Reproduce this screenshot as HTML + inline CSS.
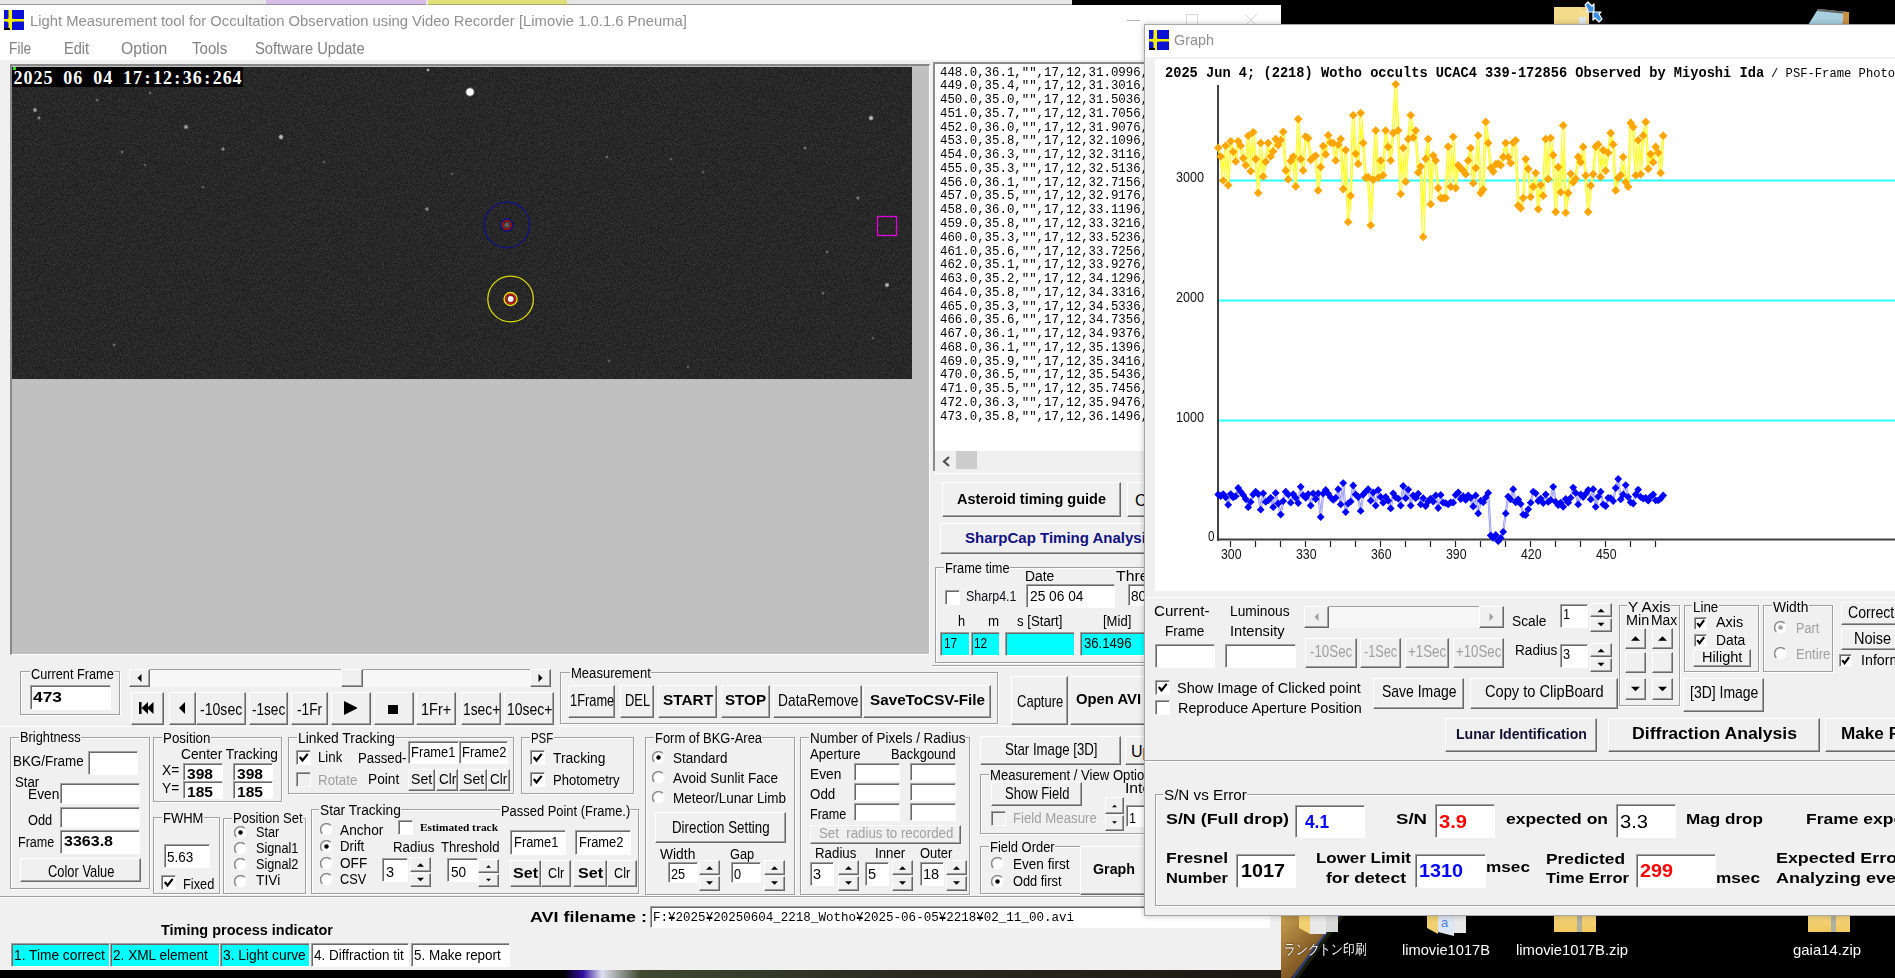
<!DOCTYPE html>
<html><head><meta charset="utf-8"><style>
html,body{margin:0;padding:0;width:1895px;height:978px;overflow:hidden;background:#000;}
body{position:relative;font-family:"Liberation Sans", sans-serif;}
div{position:absolute;box-sizing:border-box;}
.t{position:absolute;white-space:pre;transform-origin:0 0;}
svg{position:absolute;}
</style></head><body>
<div style="left:0px;top:0px;width:266px;height:5px;background:#e6e6e6;border-bottom:1px solid #9a9a9a;"></div>
<div style="left:266px;top:0px;width:160px;height:5px;background:#d9bde9;border-bottom:1px solid #9a8aa8;"></div>
<div style="left:426px;top:0px;width:2px;height:5px;background:#e6e6e6;"></div>
<div style="left:428px;top:0px;width:139px;height:5px;background:#dfe07a;border-bottom:1px solid #a8a860;"></div>
<div style="left:567px;top:0px;width:505px;height:5px;background:#e6e6e6;border-bottom:1px solid #9a9a9a;"></div>
<svg style="left:1540px;top:0" width="80" height="25"><rect x="14" y="7" width="35" height="18" fill="#f2d47a"/><polygon points="14,7 40,7 49,14 49,25 14,25" fill="#f5dc8c"/><rect x="39" y="17" width="7" height="8" fill="#e0e8f0"/><g stroke="#fff" stroke-width="1.2" stroke-linejoin="round"><polygon points="45,5 48,2 52,6 54,4 54,12 46,12 48,10" fill="#3a8ee0"/><polygon points="62,19 59,22 55,18 53,20 53,12 61,12 59,14" fill="#3a8ee0"/></g></svg>
<svg style="left:1790px;top:0" width="80" height="25"><polygon points="18,25 28,9 58,12 52,25" fill="#a8d0e0"/><polygon points="28,9 58,12 57,14 27,11" fill="#606060"/><rect x="53" y="12" width="6" height="13" fill="#c89040"/></svg>
<div style="left:0px;top:5px;width:1281px;height:966px;background:#f0f0f0;"></div>
<div style="left:0px;top:5px;width:1281px;height:30px;background:#fff;"></div>
<div style="left:0px;top:35px;width:1281px;height:25px;background:#fff;"></div>
<svg style="left:4px;top:10px" width="20" height="20"><rect x="0" y="0" width="20" height="20" fill="#0a10d8"/><rect x="4.5" y="0" width="3.5" height="20" fill="#f5f000"/><rect x="0" y="9" width="20" height="2.5" fill="#f5f000"/><polygon points="6.2,3 8,8.5 13,10.2 8,12 6.2,17 4.5,12 0,10.2 4.5,8.5" fill="#f5f000"/><rect x="0" y="18" width="6" height="2" fill="#000"/></svg>
<span class="t" style="left:30px;top:12.60px;font-size:15px;line-height:15px;color:#8f8f8f;transform:scaleX(0.9877);">Light Measurement tool for Occultation Observation using Video Recorder [Limovie 1.0.1.6 Pneuma]</span>
<div style="left:1127px;top:20px;width:13px;height:1px;background:#b0b0b0;"></div>
<div style="left:1186px;top:14px;width:12px;height:12px;border:1px solid #dcdcdc;"></div>
<svg style="left:1244px;top:13px" width="14" height="14"><path d="M1 1 L13 13 M13 1 L1 13" stroke="#d8d8d8" stroke-width="1"/></svg>
<span class="t" style="left:9px;top:40.17px;font-size:16.1px;line-height:16.1px;color:#808080;transform:scaleX(0.8533);">File</span>
<span class="t" style="left:64px;top:40.17px;font-size:16.1px;line-height:16.1px;color:#808080;transform:scaleX(0.9068);">Edit</span>
<span class="t" style="left:121px;top:40.17px;font-size:16.1px;line-height:16.1px;color:#808080;transform:scaleX(0.9758);">Option</span>
<span class="t" style="left:192px;top:40.17px;font-size:16.1px;line-height:16.1px;color:#808080;transform:scaleX(0.9370);">Tools</span>
<span class="t" style="left:255px;top:40.17px;font-size:16.1px;line-height:16.1px;color:#808080;transform:scaleX(0.9146);">Software Update</span>
<div style="left:10px;top:64px;width:920px;height:591px;background:#c0c0c0;border-style:solid;border-width:2px 1px 1px 2px;border-color:#888 #fff #fff #888;"></div>
<svg style="left:12px;top:67px" width="900" height="312"><defs><filter id="nz" x="0" y="0" width="100%" height="100%"><feTurbulence type="fractalNoise" baseFrequency="1.2" numOctaves="1" seed="3"/><feColorMatrix type="matrix" values="0 0 0 0 0.36  0 0 0 0 0.36  0 0 0 0 0.36  0.5 0 0 0 -0.18"/></filter><radialGradient id="sg"><stop offset="0" stop-color="#fff"/><stop offset="0.5" stop-color="#fff" stop-opacity=".8"/><stop offset="1" stop-color="#fff" stop-opacity="0"/></radialGradient></defs><rect width="900" height="312" fill="#1e1e1e"/><rect width="900" height="312" filter="url(#nz)"/><circle cx="458" cy="25" r="5.1" fill="url(#sg)" opacity="1"/><circle cx="416" cy="3" r="1.9" fill="url(#sg)" opacity="0.7"/><circle cx="23" cy="43" r="2.6" fill="url(#sg)" opacity="0.6"/><circle cx="27" cy="51" r="2.1" fill="url(#sg)" opacity="0.5"/><circle cx="174" cy="60" r="2.7" fill="url(#sg)" opacity="0.6"/><circle cx="269" cy="70" r="2.9" fill="url(#sg)" opacity="0.75"/><circle cx="211" cy="82" r="2.2" fill="url(#sg)" opacity="0.5"/><circle cx="110" cy="85" r="1.9" fill="url(#sg)" opacity="0.35"/><circle cx="85" cy="33" r="1.9" fill="url(#sg)" opacity="0.35"/><circle cx="138" cy="26" r="1.9" fill="url(#sg)" opacity="0.35"/><circle cx="415" cy="142" r="2.4" fill="url(#sg)" opacity="0.5"/><circle cx="595" cy="90" r="1.9" fill="url(#sg)" opacity="0.35"/><circle cx="440" cy="107" r="1.8" fill="url(#sg)" opacity="0.3"/><circle cx="312" cy="95" r="1.8" fill="url(#sg)" opacity="0.3"/><circle cx="191" cy="120" r="1.8" fill="url(#sg)" opacity="0.3"/><circle cx="133" cy="98" r="1.8" fill="url(#sg)" opacity="0.3"/><circle cx="859" cy="51" r="2.9" fill="url(#sg)" opacity="0.75"/><circle cx="793" cy="81" r="1.9" fill="url(#sg)" opacity="0.4"/><circle cx="846" cy="131" r="2.1" fill="url(#sg)" opacity="0.45"/><circle cx="875" cy="218" r="2.7" fill="url(#sg)" opacity="0.7"/><circle cx="815" cy="185" r="1.9" fill="url(#sg)" opacity="0.35"/><circle cx="811" cy="226" r="1.9" fill="url(#sg)" opacity="0.35"/><circle cx="102" cy="278" r="1.9" fill="url(#sg)" opacity="0.35"/><circle cx="659" cy="92" r="1.8" fill="url(#sg)" opacity="0.3"/><circle cx="691" cy="105" r="1.8" fill="url(#sg)" opacity="0.3"/><circle cx="861" cy="271" r="1.8" fill="url(#sg)" opacity="0.3"/><circle cx="597" cy="294" r="1.9" fill="url(#sg)" opacity="0.3"/><circle cx="676" cy="300" r="1.8" fill="url(#sg)" opacity="0.3"/><circle cx="458" cy="25" r="3.5" fill="#fff"/><circle cx="494.8" cy="158" r="22.8" fill="none" stroke="#10108a" stroke-width="1.3"/><circle cx="494.8" cy="158" r="2.5" fill="#606060"/><circle cx="494.8" cy="158" r="4.2" fill="none" stroke="#b01010" stroke-width="1.5"/><circle cx="494.8" cy="158" r="6" fill="none" stroke="#10108a" stroke-width="1.3"/><circle cx="498.6" cy="232" r="22.8" fill="none" stroke="#d8d810" stroke-width="1.3"/><circle cx="498.6" cy="232" r="3" fill="#f0f0f0"/><circle cx="498.6" cy="232" r="4.6" fill="none" stroke="#e01010" stroke-width="1.6"/><circle cx="498.6" cy="232" r="6.5" fill="none" stroke="#e0e010" stroke-width="1.4"/><rect x="865.5" y="149.5" width="19" height="19" fill="none" stroke="#e000e0" stroke-width="1.3"/></svg>
<div style="left:12px;top:67px;width:231px;height:20px;background:#000;"></div>
<div style="left:13px;top:67px;width:3px;height:3px;background:#20e020;"></div>
<span class="t" style="left:13.00px;top:69px;width:10px;text-align:center;font-family:'Liberation Serif', serif;font-weight:bold;font-size:18px;line-height:18px;color:#fff;">2</span>
<span class="t" style="left:22.96px;top:69px;width:10px;text-align:center;font-family:'Liberation Serif', serif;font-weight:bold;font-size:18px;line-height:18px;color:#fff;">0</span>
<span class="t" style="left:32.92px;top:69px;width:10px;text-align:center;font-family:'Liberation Serif', serif;font-weight:bold;font-size:18px;line-height:18px;color:#fff;">2</span>
<span class="t" style="left:42.88px;top:69px;width:10px;text-align:center;font-family:'Liberation Serif', serif;font-weight:bold;font-size:18px;line-height:18px;color:#fff;">5</span>
<span class="t" style="left:62.80px;top:69px;width:10px;text-align:center;font-family:'Liberation Serif', serif;font-weight:bold;font-size:18px;line-height:18px;color:#fff;">0</span>
<span class="t" style="left:72.76px;top:69px;width:10px;text-align:center;font-family:'Liberation Serif', serif;font-weight:bold;font-size:18px;line-height:18px;color:#fff;">6</span>
<span class="t" style="left:92.68px;top:69px;width:10px;text-align:center;font-family:'Liberation Serif', serif;font-weight:bold;font-size:18px;line-height:18px;color:#fff;">0</span>
<span class="t" style="left:102.64px;top:69px;width:10px;text-align:center;font-family:'Liberation Serif', serif;font-weight:bold;font-size:18px;line-height:18px;color:#fff;">4</span>
<span class="t" style="left:122.56px;top:69px;width:10px;text-align:center;font-family:'Liberation Serif', serif;font-weight:bold;font-size:18px;line-height:18px;color:#fff;">1</span>
<span class="t" style="left:132.52px;top:69px;width:10px;text-align:center;font-family:'Liberation Serif', serif;font-weight:bold;font-size:18px;line-height:18px;color:#fff;">7</span>
<span class="t" style="left:142.48px;top:69px;width:10px;text-align:center;font-family:'Liberation Serif', serif;font-weight:bold;font-size:18px;line-height:18px;color:#fff;">:</span>
<span class="t" style="left:152.44px;top:69px;width:10px;text-align:center;font-family:'Liberation Serif', serif;font-weight:bold;font-size:18px;line-height:18px;color:#fff;">1</span>
<span class="t" style="left:162.40px;top:69px;width:10px;text-align:center;font-family:'Liberation Serif', serif;font-weight:bold;font-size:18px;line-height:18px;color:#fff;">2</span>
<span class="t" style="left:172.36px;top:69px;width:10px;text-align:center;font-family:'Liberation Serif', serif;font-weight:bold;font-size:18px;line-height:18px;color:#fff;">:</span>
<span class="t" style="left:182.32px;top:69px;width:10px;text-align:center;font-family:'Liberation Serif', serif;font-weight:bold;font-size:18px;line-height:18px;color:#fff;">3</span>
<span class="t" style="left:192.28px;top:69px;width:10px;text-align:center;font-family:'Liberation Serif', serif;font-weight:bold;font-size:18px;line-height:18px;color:#fff;">6</span>
<span class="t" style="left:202.24px;top:69px;width:10px;text-align:center;font-family:'Liberation Serif', serif;font-weight:bold;font-size:18px;line-height:18px;color:#fff;">:</span>
<span class="t" style="left:212.20px;top:69px;width:10px;text-align:center;font-family:'Liberation Serif', serif;font-weight:bold;font-size:18px;line-height:18px;color:#fff;">2</span>
<span class="t" style="left:222.16px;top:69px;width:10px;text-align:center;font-family:'Liberation Serif', serif;font-weight:bold;font-size:18px;line-height:18px;color:#fff;">6</span>
<span class="t" style="left:232.12px;top:69px;width:10px;text-align:center;font-family:'Liberation Serif', serif;font-weight:bold;font-size:18px;line-height:18px;color:#fff;">4</span>
<div style="left:933px;top:62px;width:227px;height:411px;background:#fff;border-style:solid;border-width:2px 0 0 2px;border-color:#8a8a8a;"></div>
<span class="t" style="left:940px;top:65.64px;font-size:13px;line-height:13px;color:#000;font-family:'Liberation Mono', monospace;transform:scaleX(0.9525);">448.0,36.1,"",17,12,31.0996,</span>
<span class="t" style="left:940px;top:79.40px;font-size:13px;line-height:13px;color:#000;font-family:'Liberation Mono', monospace;transform:scaleX(0.9525);">449.0,35.4,"",17,12,31.3016,</span>
<span class="t" style="left:940px;top:93.16px;font-size:13px;line-height:13px;color:#000;font-family:'Liberation Mono', monospace;transform:scaleX(0.9525);">450.0,35.0,"",17,12,31.5036,</span>
<span class="t" style="left:940px;top:106.92px;font-size:13px;line-height:13px;color:#000;font-family:'Liberation Mono', monospace;transform:scaleX(0.9525);">451.0,35.7,"",17,12,31.7056,</span>
<span class="t" style="left:940px;top:120.68px;font-size:13px;line-height:13px;color:#000;font-family:'Liberation Mono', monospace;transform:scaleX(0.9525);">452.0,36.0,"",17,12,31.9076,</span>
<span class="t" style="left:940px;top:134.44px;font-size:13px;line-height:13px;color:#000;font-family:'Liberation Mono', monospace;transform:scaleX(0.9525);">453.0,35.8,"",17,12,32.1096,</span>
<span class="t" style="left:940px;top:148.20px;font-size:13px;line-height:13px;color:#000;font-family:'Liberation Mono', monospace;transform:scaleX(0.9525);">454.0,36.3,"",17,12,32.3116,</span>
<span class="t" style="left:940px;top:161.96px;font-size:13px;line-height:13px;color:#000;font-family:'Liberation Mono', monospace;transform:scaleX(0.9525);">455.0,35.3,"",17,12,32.5136,</span>
<span class="t" style="left:940px;top:175.72px;font-size:13px;line-height:13px;color:#000;font-family:'Liberation Mono', monospace;transform:scaleX(0.9525);">456.0,36.1,"",17,12,32.7156,</span>
<span class="t" style="left:940px;top:189.48px;font-size:13px;line-height:13px;color:#000;font-family:'Liberation Mono', monospace;transform:scaleX(0.9525);">457.0,35.5,"",17,12,32.9176,</span>
<span class="t" style="left:940px;top:203.24px;font-size:13px;line-height:13px;color:#000;font-family:'Liberation Mono', monospace;transform:scaleX(0.9525);">458.0,36.0,"",17,12,33.1196,</span>
<span class="t" style="left:940px;top:217.00px;font-size:13px;line-height:13px;color:#000;font-family:'Liberation Mono', monospace;transform:scaleX(0.9525);">459.0,35.8,"",17,12,33.3216,</span>
<span class="t" style="left:940px;top:230.76px;font-size:13px;line-height:13px;color:#000;font-family:'Liberation Mono', monospace;transform:scaleX(0.9525);">460.0,35.3,"",17,12,33.5236,</span>
<span class="t" style="left:940px;top:244.52px;font-size:13px;line-height:13px;color:#000;font-family:'Liberation Mono', monospace;transform:scaleX(0.9525);">461.0,35.6,"",17,12,33.7256,</span>
<span class="t" style="left:940px;top:258.28px;font-size:13px;line-height:13px;color:#000;font-family:'Liberation Mono', monospace;transform:scaleX(0.9525);">462.0,35.1,"",17,12,33.9276,</span>
<span class="t" style="left:940px;top:272.04px;font-size:13px;line-height:13px;color:#000;font-family:'Liberation Mono', monospace;transform:scaleX(0.9525);">463.0,35.2,"",17,12,34.1296,</span>
<span class="t" style="left:940px;top:285.80px;font-size:13px;line-height:13px;color:#000;font-family:'Liberation Mono', monospace;transform:scaleX(0.9525);">464.0,35.8,"",17,12,34.3316,</span>
<span class="t" style="left:940px;top:299.56px;font-size:13px;line-height:13px;color:#000;font-family:'Liberation Mono', monospace;transform:scaleX(0.9525);">465.0,35.3,"",17,12,34.5336,</span>
<span class="t" style="left:940px;top:313.32px;font-size:13px;line-height:13px;color:#000;font-family:'Liberation Mono', monospace;transform:scaleX(0.9525);">466.0,35.6,"",17,12,34.7356,</span>
<span class="t" style="left:940px;top:327.08px;font-size:13px;line-height:13px;color:#000;font-family:'Liberation Mono', monospace;transform:scaleX(0.9525);">467.0,36.1,"",17,12,34.9376,</span>
<span class="t" style="left:940px;top:340.84px;font-size:13px;line-height:13px;color:#000;font-family:'Liberation Mono', monospace;transform:scaleX(0.9525);">468.0,36.1,"",17,12,35.1396,</span>
<span class="t" style="left:940px;top:354.60px;font-size:13px;line-height:13px;color:#000;font-family:'Liberation Mono', monospace;transform:scaleX(0.9525);">469.0,35.9,"",17,12,35.3416,</span>
<span class="t" style="left:940px;top:368.36px;font-size:13px;line-height:13px;color:#000;font-family:'Liberation Mono', monospace;transform:scaleX(0.9525);">470.0,36.5,"",17,12,35.5436,</span>
<span class="t" style="left:940px;top:382.12px;font-size:13px;line-height:13px;color:#000;font-family:'Liberation Mono', monospace;transform:scaleX(0.9525);">471.0,35.5,"",17,12,35.7456,</span>
<span class="t" style="left:940px;top:395.88px;font-size:13px;line-height:13px;color:#000;font-family:'Liberation Mono', monospace;transform:scaleX(0.9525);">472.0,36.3,"",17,12,35.9476,</span>
<span class="t" style="left:940px;top:409.64px;font-size:13px;line-height:13px;color:#000;font-family:'Liberation Mono', monospace;transform:scaleX(0.9525);">473.0,35.8,"",17,12,36.1496,</span>
<div style="left:935px;top:451px;width:225px;height:20px;background:#f0f0f0;"></div>
<svg style="left:940px;top:454px" width="14" height="14"><path d="M9 3 L4 7.5 L9 12" stroke="#505050" stroke-width="2.2" fill="none"/></svg>
<div style="left:956px;top:451px;width:21px;height:18px;background:#cdcdcd;"></div>
<div style="left:933px;top:471px;width:227px;height:2px;background:#f0f0f0;"></div>
<div style="left:935px;top:473px;width:225px;height:1px;background:#fff;"></div>
<div style="left:942px;top:482px;width:179px;height:35px;background:#f0f0f0;border-style:solid;border-width:1px;border-color:#fff #696969 #696969 #fff;box-shadow:inset -1px -1px 0 #a0a0a0;"></div>
<span class="t" style="left:957.0px;top:490.80px;font-size:15.0px;line-height:15.0px;color:#000;font-weight:bold;transform:scaleX(0.9664);">Asteroid timing guide</span>
<div style="left:1127px;top:482px;width:53px;height:35px;background:#f0f0f0;border-style:solid;border-width:1px;border-color:#fff #696969 #696969 #fff;box-shadow:inset -1px -1px 0 #a0a0a0;"></div>
<span class="t" style="left:1135px;top:492.17px;font-size:16.1px;line-height:16.1px;color:#000;">C</span>
<div style="left:940px;top:523px;width:240px;height:31px;background:#f0f0f0;border-style:solid;border-width:1px;border-color:#fff #696969 #696969 #fff;box-shadow:inset -1px -1px 0 #a0a0a0;"></div>
<span class="t" style="left:965px;top:529.80px;font-size:15.0px;line-height:15.0px;color:#101080;font-weight:bold;">SharpCap Timing Analysis</span>
<div style="left:935px;top:567px;width:245px;height:96px;border:1px solid #a0a0a0;box-shadow:1px 1px 0 #fff, inset 1px 1px 0 #fff;"></div>
<div style="left:944px;top:561px;width:66px;height:12px;background:#f0f0f0;"></div>
<span class="t" style="left:945px;top:560.69px;font-size:14.9px;line-height:14.9px;color:#000;transform:scaleX(0.8582);">Frame time</span>
<span class="t" style="left:1025px;top:568.69px;font-size:14.9px;line-height:14.9px;color:#000;transform:scaleX(0.9308);">Date</span>
<span class="t" style="left:1116px;top:568.69px;font-size:14.9px;line-height:14.9px;color:#000;transform:scaleX(1.0609);">Thres</span>
<div style="left:945px;top:590px;width:15px;height:15px;background:#fff;border-style:solid;border-width:1px;border-color:#a0a0a0 #fff #fff #a0a0a0;box-shadow:inset 1px 1px 0 #696969;"></div>
<span class="t" style="left:966px;top:589.19px;font-size:14.9px;line-height:14.9px;color:#101018;transform:scaleX(0.8352);">Sharp4.1</span>
<div style="left:1026px;top:584px;width:89px;height:24px;background:#fff;border-style:solid;border-width:1px;border-color:#a0a0a0 #fff #fff #a0a0a0;box-shadow:inset 1px 1px 0 #696969;"></div>
<span class="t" style="left:1030px;top:588.69px;font-size:14.9px;line-height:14.9px;color:#000;transform:scaleX(0.9231);">25 06 04</span>
<div style="left:1128px;top:584px;width:52px;height:22px;background:#fff;border-style:solid;border-width:1px;border-color:#a0a0a0 #fff #fff #a0a0a0;box-shadow:inset 1px 1px 0 #696969;"></div>
<span class="t" style="left:1131px;top:588.69px;font-size:14.9px;line-height:14.9px;color:#000;transform:scaleX(0.9143);">80</span>
<span class="t" style="left:958px;top:613.69px;font-size:14.9px;line-height:14.9px;color:#000;transform:scaleX(0.8533);">h</span>
<span class="t" style="left:988px;top:613.69px;font-size:14.9px;line-height:14.9px;color:#000;transform:scaleX(0.8954);">m</span>
<span class="t" style="left:1017px;top:613.69px;font-size:14.9px;line-height:14.9px;color:#000;transform:scaleX(0.8855);">s [Start]</span>
<span class="t" style="left:1103px;top:613.69px;font-size:14.9px;line-height:14.9px;color:#000;transform:scaleX(0.8761);">[Mid]</span>
<div style="left:940px;top:632px;width:30px;height:24px;background:#00ffff;border-style:solid;border-width:1px;border-color:#a0a0a0 #fff #fff #a0a0a0;box-shadow:inset 1px 1px 0 #696969;"></div>
<span class="t" style="left:944px;top:636.39px;font-size:14.9px;line-height:14.9px;color:#000;transform:scaleX(0.7924);">17</span>
<div style="left:971px;top:632px;width:29px;height:24px;background:#00ffff;border-style:solid;border-width:1px;border-color:#a0a0a0 #fff #fff #a0a0a0;box-shadow:inset 1px 1px 0 #696969;"></div>
<span class="t" style="left:974px;top:636.39px;font-size:14.9px;line-height:14.9px;color:#000;transform:scaleX(0.7924);">12</span>
<div style="left:1005px;top:632px;width:70px;height:24px;background:#00ffff;border-style:solid;border-width:1px;border-color:#a0a0a0 #fff #fff #a0a0a0;box-shadow:inset 1px 1px 0 #696969;"></div>
<div style="left:1080px;top:632px;width:80px;height:24px;background:#00ffff;border-style:solid;border-width:1px;border-color:#a0a0a0 #fff #fff #a0a0a0;box-shadow:inset 1px 1px 0 #696969;"></div>
<span class="t" style="left:1084px;top:636.39px;font-size:14.9px;line-height:14.9px;color:#000;transform:scaleX(0.8815);">36.1496</span>
<div style="left:932px;top:665px;width:228px;height:2px;border-top:1px solid #a0a0a0;background:#fff;"></div>
<div style="left:20px;top:671px;width:100px;height:44px;border:1px solid #a0a0a0;box-shadow:1px 1px 0 #fff, inset 1px 1px 0 #fff;"></div>
<div style="left:30px;top:665px;width:84px;height:12px;background:#f0f0f0;"></div>
<span class="t" style="left:31px;top:666.69px;font-size:14.9px;line-height:14.9px;color:#000;transform:scaleX(0.8551);">Current Frame</span>
<div style="left:30px;top:685px;width:81px;height:25px;background:#fff;border-style:solid;border-width:1px;border-color:#a0a0a0 #fff #fff #a0a0a0;box-shadow:inset 1px 1px 0 #696969;"></div>
<span class="t" style="left:33px;top:688.80px;font-size:15px;line-height:15px;color:#000;font-weight:bold;transform:scaleX(1.1586);">473</span>
<div style="left:129px;top:669px;width:422px;height:18px;background:#f7f7f7;border-top:1px solid #a0a0a0;"></div>
<div style="left:129px;top:669px;width:21px;height:18px;background:#f0f0f0;border-style:solid;border-width:1px;border-color:#fff #696969 #696969 #fff;box-shadow:inset -1px -1px 0 #a0a0a0;"></div>
<svg style="position:absolute;left:0;top:0;overflow:visible" width="1" height="1"><polygon points="141.5,674.0 141.5,682.0 137.5,678.0" fill="#000"/></svg>
<div style="left:530px;top:669px;width:21px;height:18px;background:#f0f0f0;border-style:solid;border-width:1px;border-color:#fff #696969 #696969 #fff;box-shadow:inset -1px -1px 0 #a0a0a0;"></div>
<svg style="position:absolute;left:0;top:0;overflow:visible" width="1" height="1"><polygon points="538.5,674.0 538.5,682.0 542.5,678.0" fill="#000"/></svg>
<div style="left:341px;top:669px;width:22px;height:18px;background:#f0f0f0;border-style:solid;border-width:1px;border-color:#fff #696969 #696969 #fff;box-shadow:inset -1px -1px 0 #a0a0a0;"></div>
<div style="left:131px;top:692px;width:33px;height:33px;background:#f0f0f0;border-style:solid;border-width:1px;border-color:#fff #696969 #696969 #fff;box-shadow:inset -1px -1px 0 #a0a0a0;"></div>
<div style="left:169px;top:692px;width:27px;height:33px;background:#f0f0f0;border-style:solid;border-width:1px;border-color:#fff #696969 #696969 #fff;box-shadow:inset -1px -1px 0 #a0a0a0;"></div>
<div style="left:196px;top:692px;width:50px;height:33px;background:#f0f0f0;border-style:solid;border-width:1px;border-color:#fff #696969 #696969 #fff;box-shadow:inset -1px -1px 0 #a0a0a0;"></div>
<span class="t" style="left:200.0px;top:700.67px;font-size:16.1px;line-height:16.1px;color:#000;transform:scaleX(0.8746);">-10sec</span>
<div style="left:249px;top:692px;width:39px;height:33px;background:#f0f0f0;border-style:solid;border-width:1px;border-color:#fff #696969 #696969 #fff;box-shadow:inset -1px -1px 0 #a0a0a0;"></div>
<span class="t" style="left:252.0px;top:700.67px;font-size:16.1px;line-height:16.1px;color:#000;transform:scaleX(0.8435);">-1sec</span>
<div style="left:291px;top:692px;width:37px;height:33px;background:#f0f0f0;border-style:solid;border-width:1px;border-color:#fff #696969 #696969 #fff;box-shadow:inset -1px -1px 0 #a0a0a0;"></div>
<span class="t" style="left:297.0px;top:700.67px;font-size:16.1px;line-height:16.1px;color:#000;transform:scaleX(0.8524);">-1Fr</span>
<div style="left:331px;top:692px;width:40px;height:33px;background:#f0f0f0;border-style:solid;border-width:1px;border-color:#fff #696969 #696969 #fff;box-shadow:inset -1px -1px 0 #a0a0a0;"></div>
<div style="left:374px;top:692px;width:40px;height:33px;background:#f0f0f0;border-style:solid;border-width:1px;border-color:#fff #696969 #696969 #fff;box-shadow:inset -1px -1px 0 #a0a0a0;"></div>
<div style="left:416px;top:692px;width:40px;height:33px;background:#f0f0f0;border-style:solid;border-width:1px;border-color:#fff #696969 #696969 #fff;box-shadow:inset -1px -1px 0 #a0a0a0;"></div>
<span class="t" style="left:421.0px;top:700.67px;font-size:16.1px;line-height:16.1px;color:#000;transform:scaleX(0.8997);">1Fr+</span>
<div style="left:461px;top:692px;width:40px;height:33px;background:#f0f0f0;border-style:solid;border-width:1px;border-color:#fff #696969 #696969 #fff;box-shadow:inset -1px -1px 0 #a0a0a0;"></div>
<span class="t" style="left:462.5px;top:700.67px;font-size:16.1px;line-height:16.1px;color:#000;transform:scaleX(0.8577);">1sec+</span>
<div style="left:504px;top:692px;width:50px;height:33px;background:#f0f0f0;border-style:solid;border-width:1px;border-color:#fff #696969 #696969 #fff;box-shadow:inset -1px -1px 0 #a0a0a0;"></div>
<span class="t" style="left:506.5px;top:700.67px;font-size:16.1px;line-height:16.1px;color:#000;transform:scaleX(0.8647);">10sec+</span>
<svg style="left:139px;top:702px" width="20" height="12"><rect x="0" y="0" width="2.5" height="12" fill="#000"/><polygon points="2.5,6 9,0 9,12" fill="#000"/><polygon points="8,6 14.5,0 14.5,12" fill="#000"/></svg>
<svg style="left:177px;top:702px" width="10" height="12"><polygon points="2,6 8,0 8,12" fill="#000"/></svg>
<svg style="left:343px;top:701px" width="14" height="14"><polygon points="1,0 15,7 1,14" fill="#000"/></svg>
<div style="left:388px;top:704.5px;width:9.5px;height:9.0px;background:#000;"></div>
<div style="left:560px;top:672px;width:438px;height:52px;border:1px solid #a0a0a0;box-shadow:1px 1px 0 #fff, inset 1px 1px 0 #fff;"></div>
<div style="left:570px;top:666px;width:81px;height:12px;background:#f0f0f0;"></div>
<span class="t" style="left:571px;top:665.69px;font-size:14.9px;line-height:14.9px;color:#000;transform:scaleX(0.8761);">Measurement</span>
<div style="left:568px;top:685px;width:47px;height:33px;background:#f0f0f0;border-style:solid;border-width:1px;border-color:#fff #696969 #696969 #fff;box-shadow:inset -1px -1px 0 #a0a0a0;"></div>
<span class="t" style="left:569.5px;top:692.17px;font-size:16.1px;line-height:16.1px;color:#000;transform:scaleX(0.7982);">1Frame</span>
<div style="left:620px;top:685px;width:34px;height:33px;background:#f0f0f0;border-style:solid;border-width:1px;border-color:#fff #696969 #696969 #fff;box-shadow:inset -1px -1px 0 #a0a0a0;"></div>
<span class="t" style="left:624.5px;top:692.17px;font-size:16.1px;line-height:16.1px;color:#000;transform:scaleX(0.8032);">DEL</span>
<div style="left:658px;top:685px;width:59px;height:33px;background:#f0f0f0;border-style:solid;border-width:1px;border-color:#fff #696969 #696969 #fff;box-shadow:inset -1px -1px 0 #a0a0a0;"></div>
<span class="t" style="left:662.5px;top:692.30px;font-size:15.0px;line-height:15.0px;color:#000;font-weight:bold;transform:scaleX(1.0229);">START</span>
<div style="left:721px;top:685px;width:49px;height:33px;background:#f0f0f0;border-style:solid;border-width:1px;border-color:#fff #696969 #696969 #fff;box-shadow:inset -1px -1px 0 #a0a0a0;"></div>
<span class="t" style="left:725.0px;top:692.30px;font-size:15.0px;line-height:15.0px;color:#000;font-weight:bold;transform:scaleX(1.0106);">STOP</span>
<div style="left:773px;top:685px;width:89px;height:33px;background:#f0f0f0;border-style:solid;border-width:1px;border-color:#fff #696969 #696969 #fff;box-shadow:inset -1px -1px 0 #a0a0a0;"></div>
<span class="t" style="left:777.5px;top:692.17px;font-size:16.1px;line-height:16.1px;color:#000;transform:scaleX(0.8568);">DataRemove</span>
<div style="left:863px;top:685px;width:128px;height:33px;background:#f0f0f0;border-style:solid;border-width:1px;border-color:#fff #696969 #696969 #fff;box-shadow:inset -1px -1px 0 #a0a0a0;"></div>
<span class="t" style="left:869.5px;top:692.30px;font-size:15.0px;line-height:15.0px;color:#000;font-weight:bold;transform:scaleX(1.0168);">SaveToCSV-File</span>
<div style="left:1011px;top:676px;width:57px;height:49px;background:#f0f0f0;border-style:solid;border-width:1px;border-color:#fff #696969 #696969 #fff;box-shadow:inset -1px -1px 0 #a0a0a0;"></div>
<span class="t" style="left:1016.5px;top:692.67px;font-size:16.1px;line-height:16.1px;color:#000;transform:scaleX(0.8081);">Capture</span>
<div style="left:1070px;top:676px;width:110px;height:49px;background:#f0f0f0;border-style:solid;border-width:1px;border-color:#fff #696969 #696969 #fff;box-shadow:inset -1px -1px 0 #a0a0a0;"></div>
<span class="t" style="left:1076px;top:691.30px;font-size:15.0px;line-height:15.0px;color:#000;font-weight:bold;transform:scaleX(0.9872);">Open AVI</span>
<div style="left:0px;top:726px;width:1281px;height:1px;background:#fff;"></div>
<div style="left:10px;top:737px;width:140px;height:152px;border:1px solid #a0a0a0;box-shadow:1px 1px 0 #fff, inset 1px 1px 0 #fff;"></div>
<div style="left:19px;top:731px;width:62px;height:12px;background:#f0f0f0;"></div>
<span class="t" style="left:20px;top:730.39px;font-size:14.9px;line-height:14.9px;color:#000;transform:scaleX(0.8610);">Brightness</span>
<span class="t" style="left:13px;top:753.69px;font-size:14.9px;line-height:14.9px;color:#000;transform:scaleX(0.8990);">BKG/Frame</span>
<div style="left:88px;top:751px;width:50px;height:24px;background:#fff;border-style:solid;border-width:1px;border-color:#a0a0a0 #fff #fff #a0a0a0;box-shadow:inset 1px 1px 0 #696969;"></div>
<span class="t" style="left:15px;top:774.69px;font-size:14.9px;line-height:14.9px;color:#000;transform:scaleX(0.8872);">Star</span>
<span class="t" style="left:28px;top:786.69px;font-size:14.9px;line-height:14.9px;color:#000;transform:scaleX(0.9220);">Even</span>
<div style="left:60px;top:783px;width:80px;height:21px;background:#fff;border-style:solid;border-width:1px;border-color:#a0a0a0 #fff #fff #a0a0a0;box-shadow:inset 1px 1px 0 #696969;"></div>
<span class="t" style="left:28px;top:812.69px;font-size:14.9px;line-height:14.9px;color:#000;transform:scaleX(0.8609);">Odd</span>
<div style="left:60px;top:807px;width:80px;height:21px;background:#fff;border-style:solid;border-width:1px;border-color:#a0a0a0 #fff #fff #a0a0a0;box-shadow:inset 1px 1px 0 #696969;"></div>
<span class="t" style="left:18px;top:834.69px;font-size:14.9px;line-height:14.9px;color:#000;transform:scaleX(0.8448);">Frame</span>
<div style="left:60px;top:830px;width:80px;height:24px;background:#fff;border-style:solid;border-width:1px;border-color:#a0a0a0 #fff #fff #a0a0a0;box-shadow:inset 1px 1px 0 #696969;"></div>
<span class="t" style="left:64px;top:833.30px;font-size:15.0px;line-height:15.0px;color:#000;font-weight:bold;transform:scaleX(1.0678);">3363.8</span>
<div style="left:20px;top:858px;width:121px;height:24px;background:#f0f0f0;border-style:solid;border-width:1px;border-color:#fff #696969 #696969 #fff;box-shadow:inset -1px -1px 0 #a0a0a0;"></div>
<span class="t" style="left:47.5px;top:862.67px;font-size:16.1px;line-height:16.1px;color:#000;transform:scaleX(0.8008);">Color Value</span>
<div style="left:153px;top:737px;width:129px;height:65px;border:1px solid #a0a0a0;box-shadow:1px 1px 0 #fff, inset 1px 1px 0 #fff;"></div>
<div style="left:162px;top:731px;width:49px;height:12px;background:#f0f0f0;"></div>
<span class="t" style="left:163px;top:731.39px;font-size:14.9px;line-height:14.9px;color:#000;transform:scaleX(0.8956);">Position</span>
<span class="t" style="left:181px;top:746.69px;font-size:14.9px;line-height:14.9px;color:#000;transform:scaleX(0.9221);">Center Tracking</span>
<span class="t" style="left:162px;top:762.69px;font-size:14.9px;line-height:14.9px;color:#000;transform:scaleX(0.9213);">X=</span>
<span class="t" style="left:162px;top:780.69px;font-size:14.9px;line-height:14.9px;color:#000;transform:scaleX(0.9213);">Y=</span>
<div style="left:183px;top:763px;width:40px;height:18px;background:#fff;border-style:solid;border-width:1px;border-color:#a0a0a0 #fff #fff #a0a0a0;box-shadow:inset 1px 1px 0 #696969;"></div>
<div style="left:233px;top:763px;width:40px;height:18px;background:#fff;border-style:solid;border-width:1px;border-color:#a0a0a0 #fff #fff #a0a0a0;box-shadow:inset 1px 1px 0 #696969;"></div>
<div style="left:183px;top:781px;width:40px;height:18px;background:#fff;border-style:solid;border-width:1px;border-color:#a0a0a0 #fff #fff #a0a0a0;box-shadow:inset 1px 1px 0 #696969;"></div>
<div style="left:233px;top:781px;width:40px;height:18px;background:#fff;border-style:solid;border-width:1px;border-color:#a0a0a0 #fff #fff #a0a0a0;box-shadow:inset 1px 1px 0 #696969;"></div>
<span class="t" style="left:187px;top:765.80px;font-size:15.0px;line-height:15.0px;color:#000;font-weight:bold;transform:scaleX(1.0387);">398</span>
<span class="t" style="left:237px;top:765.80px;font-size:15.0px;line-height:15.0px;color:#000;font-weight:bold;transform:scaleX(1.0387);">398</span>
<span class="t" style="left:187px;top:783.80px;font-size:15.0px;line-height:15.0px;color:#000;font-weight:bold;transform:scaleX(1.0387);">185</span>
<span class="t" style="left:237px;top:783.80px;font-size:15.0px;line-height:15.0px;color:#000;font-weight:bold;transform:scaleX(1.0387);">185</span>
<div style="left:153px;top:817px;width:67px;height:77px;border:1px solid #a0a0a0;box-shadow:1px 1px 0 #fff, inset 1px 1px 0 #fff;"></div>
<div style="left:162px;top:811px;width:42px;height:12px;background:#f0f0f0;"></div>
<span class="t" style="left:163px;top:811.19px;font-size:14.9px;line-height:14.9px;color:#000;transform:scaleX(0.8720);">FWHM</span>
<div style="left:164px;top:844px;width:46px;height:24px;background:#fff;border-style:solid;border-width:1px;border-color:#a0a0a0 #fff #fff #a0a0a0;box-shadow:inset 1px 1px 0 #696969;"></div>
<span class="t" style="left:167px;top:849.69px;font-size:14.9px;line-height:14.9px;color:#000;transform:scaleX(0.9057);">5.63</span>
<div style="left:161px;top:875px;width:15px;height:15px;background:#fff;border-style:solid;border-width:1px;border-color:#a0a0a0 #fff #fff #a0a0a0;box-shadow:inset 1px 1px 0 #696969;"></div>
<svg style="position:absolute;left:161px;top:875px" width="15" height="15"><path d="M3.8 7.0 L6.5 10.5 L11.7 3.8" stroke="#000" stroke-width="2.2" fill="none"/></svg>
<span class="t" style="left:183px;top:876.69px;font-size:14.9px;line-height:14.9px;color:#000;transform:scaleX(0.8594);">Fixed</span>
<div style="left:223px;top:818px;width:83px;height:76px;border:1px solid #a0a0a0;box-shadow:1px 1px 0 #fff, inset 1px 1px 0 #fff;"></div>
<div style="left:232px;top:812px;width:71px;height:12px;background:#f0f0f0;"></div>
<span class="t" style="left:233px;top:811.19px;font-size:14.9px;line-height:14.9px;color:#000;transform:scaleX(0.8766);">Position Set</span>
<svg style="position:absolute;left:234px;top:826.0px" width="13" height="13"><circle cx="6.5" cy="6.5" r="5.5" fill="#fff" stroke="#fff"/><path d="M 2.3 10.7 A 5.0 5.0 0 0 1 10.7 2.3" stroke="#8a8a8a" stroke-width="1.5" fill="none"/><circle cx="6.5" cy="6.5" r="2.2" fill="#000"/></svg>
<span class="t" style="left:255.5px;top:824.89px;font-size:14.9px;line-height:14.9px;color:#000;transform:scaleX(0.8503);">Star</span>
<svg style="position:absolute;left:234px;top:842.2px" width="13" height="13"><circle cx="6.5" cy="6.5" r="5.5" fill="#fff" stroke="#fff"/><path d="M 2.3 10.7 A 5.0 5.0 0 0 1 10.7 2.3" stroke="#8a8a8a" stroke-width="1.5" fill="none"/></svg>
<span class="t" style="left:255.5px;top:841.09px;font-size:14.9px;line-height:14.9px;color:#000;transform:scaleX(0.8535);">Signal1</span>
<svg style="position:absolute;left:234px;top:858.4px" width="13" height="13"><circle cx="6.5" cy="6.5" r="5.5" fill="#fff" stroke="#fff"/><path d="M 2.3 10.7 A 5.0 5.0 0 0 1 10.7 2.3" stroke="#8a8a8a" stroke-width="1.5" fill="none"/></svg>
<span class="t" style="left:255.5px;top:857.29px;font-size:14.9px;line-height:14.9px;color:#000;transform:scaleX(0.8535);">Signal2</span>
<svg style="position:absolute;left:234px;top:874.6px" width="13" height="13"><circle cx="6.5" cy="6.5" r="5.5" fill="#fff" stroke="#fff"/><path d="M 2.3 10.7 A 5.0 5.0 0 0 1 10.7 2.3" stroke="#8a8a8a" stroke-width="1.5" fill="none"/></svg>
<span class="t" style="left:255.5px;top:873.49px;font-size:14.9px;line-height:14.9px;color:#000;transform:scaleX(0.9245);">TIVi</span>
<div style="left:288px;top:737px;width:226px;height:57px;border:1px solid #a0a0a0;box-shadow:1px 1px 0 #fff, inset 1px 1px 0 #fff;"></div>
<div style="left:297px;top:731px;width:98px;height:12px;background:#f0f0f0;"></div>
<span class="t" style="left:298px;top:731.39px;font-size:14.9px;line-height:14.9px;color:#000;transform:scaleX(0.9293);">Linked Tracking</span>
<div style="left:296px;top:750px;width:15px;height:15px;background:#fff;border-style:solid;border-width:1px;border-color:#a0a0a0 #fff #fff #a0a0a0;box-shadow:inset 1px 1px 0 #696969;"></div>
<svg style="position:absolute;left:296px;top:750px" width="15" height="15"><path d="M3.8 7.0 L6.5 10.5 L11.7 3.8" stroke="#000" stroke-width="2.2" fill="none"/></svg>
<span class="t" style="left:318px;top:750.39px;font-size:14.9px;line-height:14.9px;color:#000;transform:scaleX(0.8870);">Link</span>
<div style="left:296px;top:772px;width:15px;height:15px;background:#f0f0f0;border-style:solid;border-width:1px;border-color:#a0a0a0 #fff #fff #a0a0a0;box-shadow:inset 1px 1px 0 #696969;"></div>
<span class="t" style="left:318px;top:772.69px;font-size:14.9px;line-height:14.9px;color:#a0a0a0;transform:scaleX(0.8974);">Rotate</span>
<span class="t" style="left:358px;top:750.69px;font-size:14.9px;line-height:14.9px;color:#000;transform:scaleX(0.8871);">Passed-</span>
<span class="t" style="left:368px;top:771.69px;font-size:14.9px;line-height:14.9px;color:#000;transform:scaleX(0.9220);">Point</span>
<div style="left:408px;top:741px;width:51px;height:23px;background:#fff;border-style:solid;border-width:1px;border-color:#a0a0a0 #fff #fff #a0a0a0;box-shadow:inset 1px 1px 0 #696969;"></div>
<span class="t" style="left:411px;top:744.69px;font-size:14.9px;line-height:14.9px;color:#000;transform:scaleX(0.8659);">Frame1</span>
<div style="left:459px;top:741px;width:49px;height:23px;background:#fff;border-style:solid;border-width:1px;border-color:#a0a0a0 #fff #fff #a0a0a0;box-shadow:inset 1px 1px 0 #696969;"></div>
<span class="t" style="left:462px;top:744.69px;font-size:14.9px;line-height:14.9px;color:#000;transform:scaleX(0.8659);">Frame2</span>
<div style="left:408px;top:769px;width:27px;height:22px;background:#f0f0f0;border-style:solid;border-width:1px;border-color:#fff #696969 #696969 #fff;box-shadow:inset -1px -1px 0 #a0a0a0;"></div>
<span class="t" style="left:411.0px;top:772.19px;font-size:14.9px;line-height:14.9px;color:#000;transform:scaleX(0.9485);">Set</span>
<div style="left:436px;top:769px;width:22px;height:22px;background:#f0f0f0;border-style:solid;border-width:1px;border-color:#fff #696969 #696969 #fff;box-shadow:inset -1px -1px 0 #a0a0a0;"></div>
<span class="t" style="left:438.5px;top:772.19px;font-size:14.9px;line-height:14.9px;color:#000;transform:scaleX(0.9023);">Clr</span>
<div style="left:459px;top:769px;width:28px;height:22px;background:#f0f0f0;border-style:solid;border-width:1px;border-color:#fff #696969 #696969 #fff;box-shadow:inset -1px -1px 0 #a0a0a0;"></div>
<span class="t" style="left:462.5px;top:772.19px;font-size:14.9px;line-height:14.9px;color:#000;transform:scaleX(0.9485);">Set</span>
<div style="left:487px;top:769px;width:23px;height:22px;background:#f0f0f0;border-style:solid;border-width:1px;border-color:#fff #696969 #696969 #fff;box-shadow:inset -1px -1px 0 #a0a0a0;"></div>
<span class="t" style="left:490.0px;top:772.19px;font-size:14.9px;line-height:14.9px;color:#000;transform:scaleX(0.9023);">Clr</span>
<div style="left:521px;top:737px;width:113px;height:57px;border:1px solid #a0a0a0;box-shadow:1px 1px 0 #fff, inset 1px 1px 0 #fff;"></div>
<div style="left:530px;top:731px;width:24px;height:12px;background:#f0f0f0;"></div>
<span class="t" style="left:531px;top:731.39px;font-size:14.9px;line-height:14.9px;color:#000;transform:scaleX(0.7668);">PSF</span>
<div style="left:530px;top:750px;width:15px;height:15px;background:#fff;border-style:solid;border-width:1px;border-color:#a0a0a0 #fff #fff #a0a0a0;box-shadow:inset 1px 1px 0 #696969;"></div>
<svg style="position:absolute;left:530px;top:750px" width="15" height="15"><path d="M3.8 7.0 L6.5 10.5 L11.7 3.8" stroke="#000" stroke-width="2.2" fill="none"/></svg>
<span class="t" style="left:553px;top:750.69px;font-size:14.9px;line-height:14.9px;color:#000;transform:scaleX(0.9284);">Tracking</span>
<div style="left:530px;top:772px;width:15px;height:15px;background:#fff;border-style:solid;border-width:1px;border-color:#a0a0a0 #fff #fff #a0a0a0;box-shadow:inset 1px 1px 0 #696969;"></div>
<svg style="position:absolute;left:530px;top:772px" width="15" height="15"><path d="M3.8 7.0 L6.5 10.5 L11.7 3.8" stroke="#000" stroke-width="2.2" fill="none"/></svg>
<span class="t" style="left:553px;top:772.69px;font-size:14.9px;line-height:14.9px;color:#000;transform:scaleX(0.8751);">Photometry</span>
<div style="left:311px;top:809px;width:328px;height:85px;border:1px solid #a0a0a0;box-shadow:1px 1px 0 #fff, inset 1px 1px 0 #fff;"></div>
<div style="left:319px;top:803px;width:82px;height:12px;background:#f0f0f0;"></div>
<span class="t" style="left:320px;top:803.39px;font-size:14.9px;line-height:14.9px;color:#000;transform:scaleX(0.9207);">Star Tracking</span>
<div style="left:500px;top:803px;width:130px;height:12px;background:#f0f0f0;"></div>
<span class="t" style="left:501px;top:803.69px;font-size:14.9px;line-height:14.9px;color:#000;transform:scaleX(0.8675);">Passed Point (Frame.)</span>
<svg style="position:absolute;left:320px;top:823.0px" width="13" height="13"><circle cx="6.5" cy="6.5" r="5.5" fill="#fff" stroke="#fff"/><path d="M 2.3 10.7 A 5.0 5.0 0 0 1 10.7 2.3" stroke="#8a8a8a" stroke-width="1.5" fill="none"/></svg>
<span class="t" style="left:340px;top:822.69px;font-size:14.9px;line-height:14.9px;color:#000;transform:scaleX(0.9201);">Anchor</span>
<svg style="position:absolute;left:320px;top:839.8px" width="13" height="13"><circle cx="6.5" cy="6.5" r="5.5" fill="#fff" stroke="#fff"/><path d="M 2.3 10.7 A 5.0 5.0 0 0 1 10.7 2.3" stroke="#8a8a8a" stroke-width="1.5" fill="none"/><circle cx="6.5" cy="6.5" r="2.2" fill="#000"/></svg>
<span class="t" style="left:340px;top:839.29px;font-size:14.9px;line-height:14.9px;color:#000;transform:scaleX(0.8877);">Drift</span>
<svg style="position:absolute;left:320px;top:856.6px" width="13" height="13"><circle cx="6.5" cy="6.5" r="5.5" fill="#fff" stroke="#fff"/><path d="M 2.3 10.7 A 5.0 5.0 0 0 1 10.7 2.3" stroke="#8a8a8a" stroke-width="1.5" fill="none"/></svg>
<span class="t" style="left:340px;top:855.89px;font-size:14.9px;line-height:14.9px;color:#000;transform:scaleX(0.9154);">OFF</span>
<svg style="position:absolute;left:320px;top:873.4px" width="13" height="13"><circle cx="6.5" cy="6.5" r="5.5" fill="#fff" stroke="#fff"/><path d="M 2.3 10.7 A 5.0 5.0 0 0 1 10.7 2.3" stroke="#8a8a8a" stroke-width="1.5" fill="none"/></svg>
<span class="t" style="left:340px;top:872.49px;font-size:14.9px;line-height:14.9px;color:#000;transform:scaleX(0.8572);">CSV</span>
<div style="left:398px;top:820px;width:15px;height:15px;background:#fff;border-style:solid;border-width:1px;border-color:#a0a0a0 #fff #fff #a0a0a0;box-shadow:inset 1px 1px 0 #696969;"></div>
<span class="t" style="left:420px;top:821.79px;font-size:11px;line-height:11px;color:#000;font-family:'Liberation Serif', serif;font-weight:bold;transform:scaleX(1.0336);">Estimated track</span>
<span class="t" style="left:393px;top:839.69px;font-size:14.9px;line-height:14.9px;color:#000;transform:scaleX(0.8930);">Radius</span>
<span class="t" style="left:441px;top:839.69px;font-size:14.9px;line-height:14.9px;color:#000;transform:scaleX(0.8843);">Threshold</span>
<div style="left:382px;top:858px;width:26px;height:24px;background:#fff;border-style:solid;border-width:1px;border-color:#a0a0a0 #fff #fff #a0a0a0;box-shadow:inset 1px 1px 0 #696969;"></div>
<span class="t" style="left:386px;top:864.69px;font-size:14.9px;line-height:14.9px;color:#000;transform:scaleX(0.9752);">3</span>
<div style="left:410px;top:857px;width:21px;height:15px;background:#f0f0f0;border-style:solid;border-width:1px;border-color:#fff #696969 #696969 #fff;box-shadow:inset -1px -1px 0 #a0a0a0;"></div>
<div style="left:410px;top:873px;width:21px;height:14px;background:#f0f0f0;border-style:solid;border-width:1px;border-color:#fff #696969 #696969 #fff;box-shadow:inset -1px -1px 0 #a0a0a0;"></div>
<svg style="position:absolute;left:0;top:0;overflow:visible" width="1" height="1"><polygon points="417.0,866.75 424.0,866.75 420.5,863.25" fill="#000"/></svg>
<svg style="position:absolute;left:0;top:0;overflow:visible" width="1" height="1"><polygon points="417.0,877.75 424.0,877.75 420.5,881.25" fill="#000"/></svg>
<div style="left:447px;top:858px;width:31px;height:24px;background:#fff;border-style:solid;border-width:1px;border-color:#a0a0a0 #fff #fff #a0a0a0;box-shadow:inset 1px 1px 0 #696969;"></div>
<span class="t" style="left:451px;top:864.69px;font-size:14.9px;line-height:14.9px;color:#000;transform:scaleX(0.9143);">50</span>
<div style="left:478px;top:859px;width:21px;height:14px;background:#f0f0f0;border-style:solid;border-width:1px;border-color:#fff #696969 #696969 #fff;box-shadow:inset -1px -1px 0 #a0a0a0;"></div>
<div style="left:478px;top:874px;width:21px;height:13px;background:#f0f0f0;border-style:solid;border-width:1px;border-color:#fff #696969 #696969 #fff;box-shadow:inset -1px -1px 0 #a0a0a0;"></div>
<svg style="position:absolute;left:0;top:0;overflow:visible" width="1" height="1"><polygon points="486.0,867.75 491.0,867.75 488.5,865.25" fill="#000"/></svg>
<svg style="position:absolute;left:0;top:0;overflow:visible" width="1" height="1"><polygon points="486.0,878.75 491.0,878.75 488.5,881.25" fill="#000"/></svg>
<div style="left:510px;top:830px;width:56px;height:25px;background:#fff;border-style:solid;border-width:1px;border-color:#a0a0a0 #fff #fff #a0a0a0;box-shadow:inset 1px 1px 0 #696969;"></div>
<span class="t" style="left:514px;top:835.29px;font-size:14.9px;line-height:14.9px;color:#000;transform:scaleX(0.8659);">Frame1</span>
<div style="left:575px;top:830px;width:56px;height:25px;background:#fff;border-style:solid;border-width:1px;border-color:#a0a0a0 #fff #fff #a0a0a0;box-shadow:inset 1px 1px 0 #696969;"></div>
<span class="t" style="left:579px;top:835.29px;font-size:14.9px;line-height:14.9px;color:#000;transform:scaleX(0.8659);">Frame2</span>
<div style="left:510px;top:860px;width:31px;height:27px;background:#f0f0f0;border-style:solid;border-width:1px;border-color:#fff #696969 #696969 #fff;box-shadow:inset -1px -1px 0 #a0a0a0;"></div>
<span class="t" style="left:513.0px;top:865.30px;font-size:15.0px;line-height:15.0px;color:#000;font-weight:bold;transform:scaleX(1.0710);">Set</span>
<div style="left:541px;top:860px;width:30px;height:27px;background:#f0f0f0;border-style:solid;border-width:1px;border-color:#fff #696969 #696969 #fff;box-shadow:inset -1px -1px 0 #a0a0a0;"></div>
<span class="t" style="left:548.0px;top:866.19px;font-size:14.9px;line-height:14.9px;color:#000;transform:scaleX(0.8493);">Clr</span>
<div style="left:573px;top:860px;width:34px;height:27px;background:#f0f0f0;border-style:solid;border-width:1px;border-color:#fff #696969 #696969 #fff;box-shadow:inset -1px -1px 0 #a0a0a0;"></div>
<span class="t" style="left:577.5px;top:865.30px;font-size:15.0px;line-height:15.0px;color:#000;font-weight:bold;transform:scaleX(1.0710);">Set</span>
<div style="left:607px;top:860px;width:30px;height:27px;background:#f0f0f0;border-style:solid;border-width:1px;border-color:#fff #696969 #696969 #fff;box-shadow:inset -1px -1px 0 #a0a0a0;"></div>
<span class="t" style="left:614.0px;top:866.19px;font-size:14.9px;line-height:14.9px;color:#000;transform:scaleX(0.8493);">Clr</span>
<div style="left:645px;top:737px;width:150px;height:158px;border:1px solid #a0a0a0;box-shadow:1px 1px 0 #fff, inset 1px 1px 0 #fff;"></div>
<div style="left:654px;top:731px;width:108px;height:12px;background:#f0f0f0;"></div>
<span class="t" style="left:655px;top:731.39px;font-size:14.9px;line-height:14.9px;color:#000;transform:scaleX(0.8680);">Form of BKG-Area</span>
<svg style="position:absolute;left:652px;top:751px" width="13" height="13"><circle cx="6.5" cy="6.5" r="5.5" fill="#fff" stroke="#fff"/><path d="M 2.3 10.7 A 5.0 5.0 0 0 1 10.7 2.3" stroke="#8a8a8a" stroke-width="1.5" fill="none"/><circle cx="6.5" cy="6.5" r="2.2" fill="#000"/></svg>
<span class="t" style="left:673px;top:750.89px;font-size:14.9px;line-height:14.9px;color:#000;transform:scaleX(0.9021);">Standard</span>
<svg style="position:absolute;left:652px;top:771px" width="13" height="13"><circle cx="6.5" cy="6.5" r="5.5" fill="#fff" stroke="#fff"/><path d="M 2.3 10.7 A 5.0 5.0 0 0 1 10.7 2.3" stroke="#8a8a8a" stroke-width="1.5" fill="none"/></svg>
<span class="t" style="left:673px;top:770.89px;font-size:14.9px;line-height:14.9px;color:#000;transform:scaleX(0.9081);">Avoid Sunlit Face</span>
<svg style="position:absolute;left:652px;top:791px" width="13" height="13"><circle cx="6.5" cy="6.5" r="5.5" fill="#fff" stroke="#fff"/><path d="M 2.3 10.7 A 5.0 5.0 0 0 1 10.7 2.3" stroke="#8a8a8a" stroke-width="1.5" fill="none"/></svg>
<span class="t" style="left:673px;top:790.89px;font-size:14.9px;line-height:14.9px;color:#000;transform:scaleX(0.9048);">Meteor/Lunar Limb</span>
<div style="left:655px;top:812px;width:131px;height:31px;background:#f0f0f0;border-style:solid;border-width:1px;border-color:#fff #696969 #696969 #fff;box-shadow:inset -1px -1px 0 #a0a0a0;"></div>
<span class="t" style="left:672.0px;top:819.17px;font-size:16.1px;line-height:16.1px;color:#000;transform:scaleX(0.8263);">Direction Setting</span>
<span class="t" style="left:660px;top:846.69px;font-size:14.9px;line-height:14.9px;color:#000;transform:scaleX(0.9283);">Width</span>
<span class="t" style="left:730px;top:846.69px;font-size:14.9px;line-height:14.9px;color:#000;transform:scaleX(0.8609);">Gap</span>
<div style="left:668px;top:862px;width:30px;height:21px;background:#fff;border-style:solid;border-width:1px;border-color:#a0a0a0 #fff #fff #a0a0a0;box-shadow:inset 1px 1px 0 #696969;"></div>
<span class="t" style="left:671px;top:866.69px;font-size:14.9px;line-height:14.9px;color:#000;transform:scaleX(0.8533);">25</span>
<div style="left:699px;top:860px;width:21px;height:15px;background:#f0f0f0;border-style:solid;border-width:1px;border-color:#fff #696969 #696969 #fff;box-shadow:inset -1px -1px 0 #a0a0a0;"></div>
<div style="left:699px;top:876px;width:21px;height:15px;background:#f0f0f0;border-style:solid;border-width:1px;border-color:#fff #696969 #696969 #fff;box-shadow:inset -1px -1px 0 #a0a0a0;"></div>
<svg style="position:absolute;left:0;top:0;overflow:visible" width="1" height="1"><polygon points="706.0,869.75 713.0,869.75 709.5,866.25" fill="#000"/></svg>
<svg style="position:absolute;left:0;top:0;overflow:visible" width="1" height="1"><polygon points="706.0,881.25 713.0,881.25 709.5,884.75" fill="#000"/></svg>
<div style="left:731px;top:862px;width:30px;height:21px;background:#fff;border-style:solid;border-width:1px;border-color:#a0a0a0 #fff #fff #a0a0a0;box-shadow:inset 1px 1px 0 #696969;"></div>
<span class="t" style="left:734px;top:866.69px;font-size:14.9px;line-height:14.9px;color:#000;transform:scaleX(0.8533);">0</span>
<div style="left:764px;top:860px;width:21px;height:15px;background:#f0f0f0;border-style:solid;border-width:1px;border-color:#fff #696969 #696969 #fff;box-shadow:inset -1px -1px 0 #a0a0a0;"></div>
<div style="left:764px;top:876px;width:21px;height:15px;background:#f0f0f0;border-style:solid;border-width:1px;border-color:#fff #696969 #696969 #fff;box-shadow:inset -1px -1px 0 #a0a0a0;"></div>
<svg style="position:absolute;left:0;top:0;overflow:visible" width="1" height="1"><polygon points="771.0,869.75 778.0,869.75 774.5,866.25" fill="#000"/></svg>
<svg style="position:absolute;left:0;top:0;overflow:visible" width="1" height="1"><polygon points="771.0,881.25 778.0,881.25 774.5,884.75" fill="#000"/></svg>
<div style="left:800px;top:737px;width:170px;height:158px;border:1px solid #a0a0a0;box-shadow:1px 1px 0 #fff, inset 1px 1px 0 #fff;"></div>
<div style="left:809px;top:731px;width:156px;height:12px;background:#f0f0f0;"></div>
<span class="t" style="left:810px;top:731.39px;font-size:14.9px;line-height:14.9px;color:#000;transform:scaleX(0.9032);">Number of Pixels / Radius</span>
<span class="t" style="left:810px;top:746.69px;font-size:14.9px;line-height:14.9px;color:#000;transform:scaleX(0.8839);">Aperture</span>
<span class="t" style="left:891px;top:746.69px;font-size:14.9px;line-height:14.9px;color:#000;transform:scaleX(0.8671);">Backgound</span>
<span class="t" style="left:810px;top:766.69px;font-size:14.9px;line-height:14.9px;color:#000;transform:scaleX(0.9220);">Even</span>
<div style="left:854px;top:763px;width:46px;height:18px;background:#fff;border-style:solid;border-width:1px;border-color:#a0a0a0 #fff #fff #a0a0a0;box-shadow:inset 1px 1px 0 #696969;"></div>
<div style="left:910px;top:763px;width:46px;height:18px;background:#fff;border-style:solid;border-width:1px;border-color:#a0a0a0 #fff #fff #a0a0a0;box-shadow:inset 1px 1px 0 #696969;"></div>
<span class="t" style="left:810px;top:786.69px;font-size:14.9px;line-height:14.9px;color:#000;transform:scaleX(0.8967);">Odd</span>
<div style="left:854px;top:783px;width:46px;height:18px;background:#fff;border-style:solid;border-width:1px;border-color:#a0a0a0 #fff #fff #a0a0a0;box-shadow:inset 1px 1px 0 #696969;"></div>
<div style="left:910px;top:783px;width:46px;height:18px;background:#fff;border-style:solid;border-width:1px;border-color:#a0a0a0 #fff #fff #a0a0a0;box-shadow:inset 1px 1px 0 #696969;"></div>
<span class="t" style="left:810px;top:806.69px;font-size:14.9px;line-height:14.9px;color:#000;transform:scaleX(0.8448);">Frame</span>
<div style="left:854px;top:803px;width:46px;height:18px;background:#fff;border-style:solid;border-width:1px;border-color:#a0a0a0 #fff #fff #a0a0a0;box-shadow:inset 1px 1px 0 #696969;"></div>
<div style="left:910px;top:803px;width:46px;height:18px;background:#fff;border-style:solid;border-width:1px;border-color:#a0a0a0 #fff #fff #a0a0a0;box-shadow:inset 1px 1px 0 #696969;"></div>
<div style="left:810px;top:825px;width:151px;height:19px;background:#f0f0f0;border-style:solid;border-width:1px;border-color:#fff #696969 #696969 #fff;box-shadow:inset -1px -1px 0 #a0a0a0;"></div>
<span class="t" style="left:819.0px;top:826.19px;font-size:14.9px;line-height:14.9px;color:#a0a0a0;transform:scaleX(0.8913);">Set  radius to recorded</span>
<span class="t" style="left:815px;top:845.69px;font-size:14.9px;line-height:14.9px;color:#000;transform:scaleX(0.8930);">Radius</span>
<span class="t" style="left:875px;top:845.69px;font-size:14.9px;line-height:14.9px;color:#000;transform:scaleX(0.8924);">Inner</span>
<span class="t" style="left:920px;top:845.69px;font-size:14.9px;line-height:14.9px;color:#000;transform:scaleX(0.8675);">Outer</span>
<div style="left:810px;top:862px;width:24px;height:24px;background:#fff;border-style:solid;border-width:1px;border-color:#a0a0a0 #fff #fff #a0a0a0;box-shadow:inset 1px 1px 0 #696969;"></div>
<span class="t" style="left:813px;top:867.49px;font-size:14.9px;line-height:14.9px;color:#000;transform:scaleX(0.9752);">3</span>
<div style="left:838px;top:860px;width:21px;height:15px;background:#f0f0f0;border-style:solid;border-width:1px;border-color:#fff #696969 #696969 #fff;box-shadow:inset -1px -1px 0 #a0a0a0;"></div>
<div style="left:838px;top:876px;width:21px;height:15px;background:#f0f0f0;border-style:solid;border-width:1px;border-color:#fff #696969 #696969 #fff;box-shadow:inset -1px -1px 0 #a0a0a0;"></div>
<svg style="position:absolute;left:0;top:0;overflow:visible" width="1" height="1"><polygon points="845.0,869.75 852.0,869.75 848.5,866.25" fill="#000"/></svg>
<svg style="position:absolute;left:0;top:0;overflow:visible" width="1" height="1"><polygon points="845.0,881.25 852.0,881.25 848.5,884.75" fill="#000"/></svg>
<div style="left:865px;top:862px;width:24px;height:24px;background:#fff;border-style:solid;border-width:1px;border-color:#a0a0a0 #fff #fff #a0a0a0;box-shadow:inset 1px 1px 0 #696969;"></div>
<span class="t" style="left:868px;top:867.49px;font-size:14.9px;line-height:14.9px;color:#000;transform:scaleX(0.9752);">5</span>
<div style="left:892px;top:860px;width:21px;height:15px;background:#f0f0f0;border-style:solid;border-width:1px;border-color:#fff #696969 #696969 #fff;box-shadow:inset -1px -1px 0 #a0a0a0;"></div>
<div style="left:892px;top:876px;width:21px;height:15px;background:#f0f0f0;border-style:solid;border-width:1px;border-color:#fff #696969 #696969 #fff;box-shadow:inset -1px -1px 0 #a0a0a0;"></div>
<svg style="position:absolute;left:0;top:0;overflow:visible" width="1" height="1"><polygon points="899.0,869.75 906.0,869.75 902.5,866.25" fill="#000"/></svg>
<svg style="position:absolute;left:0;top:0;overflow:visible" width="1" height="1"><polygon points="899.0,881.25 906.0,881.25 902.5,884.75" fill="#000"/></svg>
<div style="left:920px;top:862px;width:24px;height:24px;background:#fff;border-style:solid;border-width:1px;border-color:#a0a0a0 #fff #fff #a0a0a0;box-shadow:inset 1px 1px 0 #696969;"></div>
<span class="t" style="left:923px;top:867.49px;font-size:14.9px;line-height:14.9px;color:#000;transform:scaleX(0.9752);">18</span>
<div style="left:946px;top:860px;width:21px;height:15px;background:#f0f0f0;border-style:solid;border-width:1px;border-color:#fff #696969 #696969 #fff;box-shadow:inset -1px -1px 0 #a0a0a0;"></div>
<div style="left:946px;top:876px;width:21px;height:15px;background:#f0f0f0;border-style:solid;border-width:1px;border-color:#fff #696969 #696969 #fff;box-shadow:inset -1px -1px 0 #a0a0a0;"></div>
<svg style="position:absolute;left:0;top:0;overflow:visible" width="1" height="1"><polygon points="953.0,869.75 960.0,869.75 956.5,866.25" fill="#000"/></svg>
<svg style="position:absolute;left:0;top:0;overflow:visible" width="1" height="1"><polygon points="953.0,881.25 960.0,881.25 956.5,884.75" fill="#000"/></svg>
<div style="left:980px;top:736px;width:141px;height:29px;background:#f0f0f0;border-style:solid;border-width:1px;border-color:#fff #696969 #696969 #fff;box-shadow:inset -1px -1px 0 #a0a0a0;"></div>
<span class="t" style="left:1004.5px;top:740.67px;font-size:16.1px;line-height:16.1px;color:#000;transform:scaleX(0.8211);">Star Image [3D]</span>
<div style="left:1125px;top:736px;width:55px;height:29px;background:#f0f0f0;border-style:solid;border-width:1px;border-color:#fff #696969 #696969 #fff;box-shadow:inset -1px -1px 0 #a0a0a0;"></div>
<span class="t" style="left:1131px;top:743.17px;font-size:16.1px;line-height:16.1px;color:#000;">Up</span>
<div style="left:980px;top:774px;width:200px;height:60px;border:1px solid #a0a0a0;box-shadow:1px 1px 0 #fff, inset 1px 1px 0 #fff;"></div>
<div style="left:989px;top:768px;width:162px;height:12px;background:#f0f0f0;"></div>
<span class="t" style="left:990px;top:767.69px;font-size:14.9px;line-height:14.9px;color:#000;transform:scaleX(0.8804);">Measurement / View Option</span>
<div style="left:991px;top:782px;width:91px;height:24px;background:#f0f0f0;border-style:solid;border-width:1px;border-color:#fff #696969 #696969 #fff;box-shadow:inset -1px -1px 0 #a0a0a0;"></div>
<span class="t" style="left:1004.5px;top:784.67px;font-size:16.1px;line-height:16.1px;color:#000;transform:scaleX(0.8086);">Show Field</span>
<div style="left:991px;top:811px;width:15px;height:15px;background:#f0f0f0;border-style:solid;border-width:1px;border-color:#a0a0a0 #fff #fff #a0a0a0;box-shadow:inset 1px 1px 0 #696969;"></div>
<span class="t" style="left:1013px;top:811.19px;font-size:14.9px;line-height:14.9px;color:#a0a0a0;transform:scaleX(0.8881);">Field Measure</span>
<span class="t" style="left:1125px;top:780.69px;font-size:14.9px;line-height:14.9px;color:#000;transform:scaleX(1.0568);">Inte</span>
<div style="left:1105px;top:797px;width:19px;height:17px;background:#f0f0f0;border-style:solid;border-width:1px;border-color:#fff #696969 #696969 #fff;box-shadow:inset -1px -1px 0 #a0a0a0;"></div>
<div style="left:1105px;top:815px;width:19px;height:16px;background:#f0f0f0;border-style:solid;border-width:1px;border-color:#fff #696969 #696969 #fff;box-shadow:inset -1px -1px 0 #a0a0a0;"></div>
<svg style="position:absolute;left:0;top:0;overflow:visible" width="1" height="1"><polygon points="1112.0,807.25 1117.0,807.25 1114.5,804.75" fill="#000"/></svg>
<svg style="position:absolute;left:0;top:0;overflow:visible" width="1" height="1"><polygon points="1112.0,821.25 1117.0,821.25 1114.5,823.75" fill="#000"/></svg>
<div style="left:1126px;top:805px;width:54px;height:22px;background:#fff;border-style:solid;border-width:1px;border-color:#a0a0a0 #fff #fff #a0a0a0;box-shadow:inset 1px 1px 0 #696969;"></div>
<span class="t" style="left:1129px;top:810.69px;font-size:14.9px;line-height:14.9px;color:#000;transform:scaleX(0.8533);">1</span>
<div style="left:980px;top:846px;width:101px;height:48px;border:1px solid #a0a0a0;box-shadow:1px 1px 0 #fff, inset 1px 1px 0 #fff;"></div>
<div style="left:989px;top:840px;width:66px;height:12px;background:#f0f0f0;"></div>
<span class="t" style="left:990px;top:839.69px;font-size:14.9px;line-height:14.9px;color:#000;transform:scaleX(0.8676);">Field Order</span>
<svg style="position:absolute;left:991px;top:857px" width="13" height="13"><circle cx="6.5" cy="6.5" r="5.5" fill="#fff" stroke="#fff"/><path d="M 2.3 10.7 A 5.0 5.0 0 0 1 10.7 2.3" stroke="#8a8a8a" stroke-width="1.5" fill="none"/></svg>
<span class="t" style="left:1013px;top:856.69px;font-size:14.9px;line-height:14.9px;color:#000;transform:scaleX(0.9109);">Even first</span>
<svg style="position:absolute;left:991px;top:875px" width="13" height="13"><circle cx="6.5" cy="6.5" r="5.5" fill="#fff" stroke="#fff"/><path d="M 2.3 10.7 A 5.0 5.0 0 0 1 10.7 2.3" stroke="#8a8a8a" stroke-width="1.5" fill="none"/><circle cx="6.5" cy="6.5" r="2.2" fill="#000"/></svg>
<span class="t" style="left:1013px;top:873.69px;font-size:14.9px;line-height:14.9px;color:#000;transform:scaleX(0.8612);">Odd first</span>
<div style="left:1080px;top:846px;width:100px;height:49px;background:#f0f0f0;border-style:solid;border-width:1px;border-color:#fff #696969 #696969 #fff;box-shadow:inset -1px -1px 0 #a0a0a0;"></div>
<span class="t" style="left:1093px;top:861.30px;font-size:15.0px;line-height:15.0px;color:#000;font-weight:bold;transform:scaleX(0.9507);">Graph</span>
<div style="left:0px;top:896px;width:1281px;height:2px;background:#fff;border-top:1px solid #a0a0a0;"></div>
<span class="t" style="left:530px;top:909.30px;font-size:15px;line-height:15px;color:#000;font-weight:bold;transform:scaleX(1.1928);">AVI filename :</span>
<div style="left:650px;top:906px;width:620px;height:22px;background:#fff;border-style:solid;border-width:1px;border-color:#a0a0a0 #fff #fff #a0a0a0;box-shadow:inset 1px 1px 0 #696969;"></div>
<span class="t" style="left:653px;top:911.04px;font-size:13px;line-height:13px;color:#000;font-family:'Liberation Mono', monospace;transform:scaleX(0.9637);">F:¥2025¥20250604_2218_Wotho¥2025-06-05¥2218¥02_11_00.avi</span>
<span class="t" style="left:161px;top:922.30px;font-size:15.0px;line-height:15.0px;color:#000;font-weight:bold;transform:scaleX(0.9657);">Timing process indicator</span>
<div style="left:11px;top:943px;width:99px;height:24px;background:#00ffff;border-style:solid;border-width:1px;border-color:#a0a0a0 #fff #fff #a0a0a0;box-shadow:inset 1px 1px 0 #696969;"></div>
<span class="t" style="left:14px;top:947.69px;font-size:14.9px;line-height:14.9px;color:#000;transform:scaleX(0.9227);">1. Time correct</span>
<div style="left:110px;top:943px;width:110px;height:24px;background:#00ffff;border-style:solid;border-width:1px;border-color:#a0a0a0 #fff #fff #a0a0a0;box-shadow:inset 1px 1px 0 #696969;"></div>
<span class="t" style="left:113px;top:947.69px;font-size:14.9px;line-height:14.9px;color:#000;transform:scaleX(0.9148);">2. XML element</span>
<div style="left:220px;top:943px;width:90px;height:24px;background:#00ffff;border-style:solid;border-width:1px;border-color:#a0a0a0 #fff #fff #a0a0a0;box-shadow:inset 1px 1px 0 #696969;"></div>
<span class="t" style="left:223px;top:947.69px;font-size:14.9px;line-height:14.9px;color:#000;transform:scaleX(0.9261);">3. Light curve</span>
<div style="left:311px;top:943px;width:98px;height:24px;background:#fff;border-style:solid;border-width:1px;border-color:#a0a0a0 #fff #fff #a0a0a0;box-shadow:inset 1px 1px 0 #696969;"></div>
<span class="t" style="left:314px;top:947.69px;font-size:14.9px;line-height:14.9px;color:#000;transform:scaleX(0.9073);">4. Diffraction tit</span>
<div style="left:411px;top:943px;width:99px;height:24px;background:#fff;border-style:solid;border-width:1px;border-color:#a0a0a0 #fff #fff #a0a0a0;box-shadow:inset 1px 1px 0 #696969;"></div>
<span class="t" style="left:414px;top:947.69px;font-size:14.9px;line-height:14.9px;color:#000;transform:scaleX(0.9044);">5. Make report</span>
<svg style="left:0;top:970px" width="1281" height="8"><defs><linearGradient id="eg" x1="0" x2="1"><stop offset="0" stop-color="#000"/><stop offset="0.44" stop-color="#000"/><stop offset="0.455" stop-color="#3010a0"/><stop offset="0.47" stop-color="#e0e0f0"/><stop offset="0.5" stop-color="#404830"/><stop offset="0.7" stop-color="#2a2a22"/><stop offset="1" stop-color="#1a1812"/></linearGradient></defs><rect width="1281" height="8" fill="url(#eg)"/></svg>
<svg style="left:1281px;top:915px" width="614" height="63"><defs><linearGradient id="gold" x1="0" y1="0" x2="1" y2="1"><stop offset="0" stop-color="#c8a050"/><stop offset=".5" stop-color="#8a6028"/><stop offset="1" stop-color="#3a2810"/></linearGradient><linearGradient id="zipg" x1="0" x2="0" y1="0" y2="1"><stop offset="0" stop-color="#f5d57a"/><stop offset="1" stop-color="#f0c860"/></linearGradient></defs><rect width="614" height="63" fill="#000"/><polygon points="0,0 58,0 10,63 0,63" fill="url(#gold)"/><path d="M58,0 L12,63" stroke="#5060a0" stroke-width="3" opacity=".6"/><path d="M62,0 L16,63" stroke="#304018" stroke-width="3" opacity=".5"/><polygon points="18,0 29,0 29,19 18,13" fill="#f0d070"/><rect x="29" y="0" width="16" height="19" fill="#e8e8e8"/><rect x="45" y="0" width="12" height="17" fill="#d8d8d8"/><polygon points="146,0 157,0 157,19 146,13" fill="#f0d070"/><polygon points="157,0 173,0 173,21 157,17" fill="#dde6f5"/><text x="160" y="12" font-size="13" fill="#5080e0" font-family="Liberation Sans">a</text><rect x="173" y="0" width="12" height="18" fill="#e8e8e8"/><rect x="273" y="0" width="42" height="17" fill="url(#zipg)"/><rect x="296" y="0" width="5" height="17" fill="#b0b0a0"/><rect x="527" y="0" width="42" height="17" fill="url(#zipg)"/><rect x="550" y="0" width="5" height="17" fill="#b0b0a0"/></svg>
<span class="t" style="left:1284px;top:941px;font-size:14px;line-height:16px;color:#fff;transform:scaleX(0.84);text-shadow:0 0 2px #000;">ランクトン印刷</span>
<span class="t" style="left:1402px;top:942.10px;font-size:15px;line-height:15px;color:#fff;transform:scaleX(0.9771);">limovie1017B</span>
<span class="t" style="left:1516px;top:942.10px;font-size:15px;line-height:15px;color:#fff;transform:scaleX(0.9876);">limovie1017B.zip</span>
<span class="t" style="left:1793px;top:942.10px;font-size:15px;line-height:15px;color:#fff;transform:scaleX(0.9942);">gaia14.zip</span>
<div style="left:1144px;top:24px;width:751px;height:892px;background:#f0f0f0;border:1px solid #a8a8a8;border-right:0;box-shadow:0 0 6px rgba(0,0,0,.25);"></div>
<div style="left:1145px;top:25px;width:750px;height:32px;background:#fff;"></div>
<svg style="left:1149px;top:30px" width="20" height="20"><rect x="0" y="0" width="20" height="20" fill="#0a10d8"/><rect x="4.5" y="0" width="3.5" height="20" fill="#f5f000"/><rect x="0" y="9" width="20" height="2.5" fill="#f5f000"/><polygon points="6.2,3 8,8.5 13,10.2 8,12 6.2,17 4.5,12 0,10.2 4.5,8.5" fill="#f5f000"/><rect x="0" y="18" width="6" height="2" fill="#000"/></svg>
<span class="t" style="left:1174px;top:32.30px;font-size:15px;line-height:15px;color:#8f8f8f;transform:scaleX(0.9593);">Graph</span>
<div style="left:1155px;top:59px;width:740px;height:532px;background:#fff;"></div>
<span class="t" style="left:1165px;top:65.50px;font-size:15px;line-height:15px;color:#000;font-family:'Liberation Mono', monospace;font-weight:bold;transform:scaleX(0.9117);">2025 Jun 4; (2218) Wotho occults UCAC4 339-172856 Observed by Miyoshi Ida</span>
<span class="t" style="left:1771px;top:67.04px;font-size:13px;line-height:13px;color:#000;font-family:'Liberation Mono', monospace;transform:scaleX(0.9358);">/ PSF-Frame Photometry</span>
<svg style="left:1155px;top:59px" width="740" height="532" viewBox="1155 59 740 532"><line x1="1219" y1="420.5" x2="1895" y2="420.5" stroke="#30ffff" stroke-width="2"/><line x1="1219" y1="300.5" x2="1895" y2="300.5" stroke="#30ffff" stroke-width="2"/><line x1="1219" y1="180.5" x2="1895" y2="180.5" stroke="#30ffff" stroke-width="2"/><line x1="1218" y1="85" x2="1218" y2="541" stroke="#404040" stroke-width="2"/><line x1="1217" y1="539.5" x2="1895" y2="539.5" stroke="#404040" stroke-width="2"/><line x1="1230.5" y1="541" x2="1230.5" y2="547" stroke="#222" stroke-width="1.2"/><line x1="1255.5" y1="541" x2="1255.5" y2="547" stroke="#222" stroke-width="1.2"/><line x1="1280.5" y1="541" x2="1280.5" y2="547" stroke="#222" stroke-width="1.2"/><line x1="1305.5" y1="541" x2="1305.5" y2="547" stroke="#222" stroke-width="1.2"/><line x1="1330.5" y1="541" x2="1330.5" y2="547" stroke="#222" stroke-width="1.2"/><line x1="1355.5" y1="541" x2="1355.5" y2="547" stroke="#222" stroke-width="1.2"/><line x1="1380.5" y1="541" x2="1380.5" y2="547" stroke="#222" stroke-width="1.2"/><line x1="1405.5" y1="541" x2="1405.5" y2="547" stroke="#222" stroke-width="1.2"/><line x1="1430.5" y1="541" x2="1430.5" y2="547" stroke="#222" stroke-width="1.2"/><line x1="1455.5" y1="541" x2="1455.5" y2="547" stroke="#222" stroke-width="1.2"/><line x1="1480.5" y1="541" x2="1480.5" y2="547" stroke="#222" stroke-width="1.2"/><line x1="1505.5" y1="541" x2="1505.5" y2="547" stroke="#222" stroke-width="1.2"/><line x1="1530.5" y1="541" x2="1530.5" y2="547" stroke="#222" stroke-width="1.2"/><line x1="1555.5" y1="541" x2="1555.5" y2="547" stroke="#222" stroke-width="1.2"/><line x1="1580.5" y1="541" x2="1580.5" y2="547" stroke="#222" stroke-width="1.2"/><line x1="1605.5" y1="541" x2="1605.5" y2="547" stroke="#222" stroke-width="1.2"/><line x1="1630.5" y1="541" x2="1630.5" y2="547" stroke="#222" stroke-width="1.2"/><line x1="1655.5" y1="541" x2="1655.5" y2="547" stroke="#222" stroke-width="1.2"/><polyline points="1218.2,147.8 1220.7,156.5 1223.2,180.5 1225.7,145.7 1228.2,185.2 1230.7,141.2 1233.2,151.7 1235.7,161.4 1238.2,141.2 1240.7,145.7 1243.2,158.3 1245.7,165.2 1248.2,135.7 1250.7,171.3 1253.2,132.2 1255.7,159.1 1258.2,193.0 1260.7,143.0 1263.2,176.5 1265.7,161.7 1268.2,143.0 1270.7,156.5 1273.2,151.3 1275.7,139.1 1278.2,145.2 1280.7,140.0 1283.2,131.8 1285.7,170.4 1288.2,179.5 1290.7,160.9 1293.2,156.5 1295.7,186.4 1298.2,119.1 1300.7,159.1 1303.2,170.4 1305.7,136.5 1308.2,138.3 1310.7,160.0 1313.2,157.4 1315.7,155.7 1318.2,190.4 1320.7,167.0 1323.2,146.1 1325.7,154.4 1328.2,135.3 1330.7,142.6 1333.2,143.0 1335.7,160.5 1338.2,144.8 1340.7,139.0 1343.2,189.1 1345.7,150.1 1348.2,222.0 1350.7,195.8 1353.2,115.3 1355.7,153.7 1358.2,163.9 1360.7,113.1 1363.2,143.0 1365.7,177.9 1368.2,177.0 1370.7,225.3 1373.2,179.7 1375.7,130.5 1378.2,177.9 1380.7,160.5 1383.2,175.2 1385.7,130.5 1388.2,146.9 1390.7,160.5 1393.2,133.1 1395.7,84.3 1398.2,130.5 1400.7,194.0 1403.2,148.0 1405.7,181.8 1408.2,139.0 1410.7,115.3 1413.2,137.6 1415.7,130.5 1418.2,172.5 1420.7,166.6 1423.2,236.9 1425.7,158.7 1428.2,139.0 1430.7,204.2 1433.2,155.5 1435.7,160.5 1438.2,188.1 1440.7,198.1 1443.2,198.1 1445.7,198.1 1448.2,146.6 1450.7,186.8 1453.2,136.7 1455.7,188.1 1458.2,165.3 1460.7,168.0 1463.2,170.7 1465.7,174.3 1468.2,160.5 1470.7,148.0 1473.2,183.2 1475.7,168.0 1478.2,135.5 1480.7,193.1 1483.2,189.5 1485.7,121.9 1488.2,143.0 1490.7,168.0 1493.2,171.6 1495.7,164.4 1498.2,163.6 1500.7,165.3 1503.2,156.9 1505.7,143.0 1508.2,157.3 1510.7,163.0 1513.2,142.6 1515.7,140.3 1518.2,205.6 1520.7,208.3 1523.2,198.1 1525.7,159.1 1528.2,168.9 1530.7,197.0 1533.2,186.8 1535.7,173.0 1538.2,209.2 1540.7,185.0 1543.2,195.8 1545.7,139.0 1548.2,179.1 1550.7,138.0 1553.2,155.1 1555.7,211.9 1558.2,167.1 1560.7,192.2 1563.2,125.4 1565.7,212.7 1568.2,193.1 1570.7,173.7 1573.2,182.3 1575.7,178.8 1578.2,156.9 1580.7,162.3 1583.2,146.9 1585.7,175.5 1588.2,211.9 1590.7,185.6 1593.2,174.3 1595.7,146.6 1598.2,144.4 1600.7,177.0 1603.2,150.1 1605.7,170.7 1608.2,152.8 1610.7,133.1 1613.2,144.4 1615.7,190.4 1618.2,177.9 1620.7,175.2 1623.2,156.9 1625.7,182.3 1628.2,186.8 1630.7,122.9 1633.2,126.9 1635.7,175.5 1638.2,140.3 1640.7,174.3 1643.2,135.5 1645.7,121.9 1648.2,168.9 1650.7,154.1 1653.2,162.3 1655.7,146.9 1658.2,152.8 1660.7,173.0 1663.2,135.8" fill="none" stroke="#ffff00" stroke-width="2.6"/><polyline points="1218.2,147.8 1220.7,156.5 1223.2,180.5 1225.7,145.7 1228.2,185.2 1230.7,141.2 1233.2,151.7 1235.7,161.4 1238.2,141.2 1240.7,145.7 1243.2,158.3 1245.7,165.2 1248.2,135.7 1250.7,171.3 1253.2,132.2 1255.7,159.1 1258.2,193.0 1260.7,143.0 1263.2,176.5 1265.7,161.7 1268.2,143.0 1270.7,156.5 1273.2,151.3 1275.7,139.1 1278.2,145.2 1280.7,140.0 1283.2,131.8 1285.7,170.4 1288.2,179.5 1290.7,160.9 1293.2,156.5 1295.7,186.4 1298.2,119.1 1300.7,159.1 1303.2,170.4 1305.7,136.5 1308.2,138.3 1310.7,160.0 1313.2,157.4 1315.7,155.7 1318.2,190.4 1320.7,167.0 1323.2,146.1 1325.7,154.4 1328.2,135.3 1330.7,142.6 1333.2,143.0 1335.7,160.5 1338.2,144.8 1340.7,139.0 1343.2,189.1 1345.7,150.1 1348.2,222.0 1350.7,195.8 1353.2,115.3 1355.7,153.7 1358.2,163.9 1360.7,113.1 1363.2,143.0 1365.7,177.9 1368.2,177.0 1370.7,225.3 1373.2,179.7 1375.7,130.5 1378.2,177.9 1380.7,160.5 1383.2,175.2 1385.7,130.5 1388.2,146.9 1390.7,160.5 1393.2,133.1 1395.7,84.3 1398.2,130.5 1400.7,194.0 1403.2,148.0 1405.7,181.8 1408.2,139.0 1410.7,115.3 1413.2,137.6 1415.7,130.5 1418.2,172.5 1420.7,166.6 1423.2,236.9 1425.7,158.7 1428.2,139.0 1430.7,204.2 1433.2,155.5 1435.7,160.5 1438.2,188.1 1440.7,198.1 1443.2,198.1 1445.7,198.1 1448.2,146.6 1450.7,186.8 1453.2,136.7 1455.7,188.1 1458.2,165.3 1460.7,168.0 1463.2,170.7 1465.7,174.3 1468.2,160.5 1470.7,148.0 1473.2,183.2 1475.7,168.0 1478.2,135.5 1480.7,193.1 1483.2,189.5 1485.7,121.9 1488.2,143.0 1490.7,168.0 1493.2,171.6 1495.7,164.4 1498.2,163.6 1500.7,165.3 1503.2,156.9 1505.7,143.0 1508.2,157.3 1510.7,163.0 1513.2,142.6 1515.7,140.3 1518.2,205.6 1520.7,208.3 1523.2,198.1 1525.7,159.1 1528.2,168.9 1530.7,197.0 1533.2,186.8 1535.7,173.0 1538.2,209.2 1540.7,185.0 1543.2,195.8 1545.7,139.0 1548.2,179.1 1550.7,138.0 1553.2,155.1 1555.7,211.9 1558.2,167.1 1560.7,192.2 1563.2,125.4 1565.7,212.7 1568.2,193.1 1570.7,173.7 1573.2,182.3 1575.7,178.8 1578.2,156.9 1580.7,162.3 1583.2,146.9 1585.7,175.5 1588.2,211.9 1590.7,185.6 1593.2,174.3 1595.7,146.6 1598.2,144.4 1600.7,177.0 1603.2,150.1 1605.7,170.7 1608.2,152.8 1610.7,133.1 1613.2,144.4 1615.7,190.4 1618.2,177.9 1620.7,175.2 1623.2,156.9 1625.7,182.3 1628.2,186.8 1630.7,122.9 1633.2,126.9 1635.7,175.5 1638.2,140.3 1640.7,174.3 1643.2,135.5 1645.7,121.9 1648.2,168.9 1650.7,154.1 1653.2,162.3 1655.7,146.9 1658.2,152.8 1660.7,173.0 1663.2,135.8" fill="none" stroke="#ffffc8" stroke-width="0.9"/><polygon points="1213.9,147.8 1218.2,143.5 1222.5,147.8 1218.2,152.1" fill="#ffa500"/><polygon points="1216.4,156.5 1220.7,152.2 1225.0,156.5 1220.7,160.8" fill="#ffa500"/><polygon points="1218.9,180.5 1223.2,176.2 1227.5,180.5 1223.2,184.8" fill="#ffa500"/><polygon points="1221.4,145.7 1225.7,141.4 1230.0,145.7 1225.7,150.0" fill="#ffa500"/><polygon points="1223.9,185.2 1228.2,180.9 1232.5,185.2 1228.2,189.5" fill="#ffa500"/><polygon points="1226.4,141.2 1230.7,136.9 1235.0,141.2 1230.7,145.5" fill="#ffa500"/><polygon points="1228.9,151.7 1233.2,147.4 1237.5,151.7 1233.2,156.0" fill="#ffa500"/><polygon points="1231.4,161.4 1235.7,157.1 1240.0,161.4 1235.7,165.7" fill="#ffa500"/><polygon points="1233.9,141.2 1238.2,136.9 1242.5,141.2 1238.2,145.5" fill="#ffa500"/><polygon points="1236.4,145.7 1240.7,141.4 1245.0,145.7 1240.7,150.0" fill="#ffa500"/><polygon points="1238.9,158.3 1243.2,154.0 1247.5,158.3 1243.2,162.6" fill="#ffa500"/><polygon points="1241.4,165.2 1245.7,160.9 1250.0,165.2 1245.7,169.5" fill="#ffa500"/><polygon points="1243.9,135.7 1248.2,131.4 1252.5,135.7 1248.2,140.0" fill="#ffa500"/><polygon points="1246.4,171.3 1250.7,167.0 1255.0,171.3 1250.7,175.6" fill="#ffa500"/><polygon points="1248.9,132.2 1253.2,127.9 1257.5,132.2 1253.2,136.5" fill="#ffa500"/><polygon points="1251.4,159.1 1255.7,154.8 1260.0,159.1 1255.7,163.4" fill="#ffa500"/><polygon points="1253.9,193.0 1258.2,188.7 1262.5,193.0 1258.2,197.3" fill="#ffa500"/><polygon points="1256.4,143.0 1260.7,138.7 1265.0,143.0 1260.7,147.3" fill="#ffa500"/><polygon points="1258.9,176.5 1263.2,172.2 1267.5,176.5 1263.2,180.8" fill="#ffa500"/><polygon points="1261.4,161.7 1265.7,157.4 1270.0,161.7 1265.7,166.0" fill="#ffa500"/><polygon points="1263.9,143.0 1268.2,138.7 1272.5,143.0 1268.2,147.3" fill="#ffa500"/><polygon points="1266.4,156.5 1270.7,152.2 1275.0,156.5 1270.7,160.8" fill="#ffa500"/><polygon points="1268.9,151.3 1273.2,147.0 1277.5,151.3 1273.2,155.6" fill="#ffa500"/><polygon points="1271.4,139.1 1275.7,134.8 1280.0,139.1 1275.7,143.4" fill="#ffa500"/><polygon points="1273.9,145.2 1278.2,140.9 1282.5,145.2 1278.2,149.5" fill="#ffa500"/><polygon points="1276.4,140.0 1280.7,135.7 1285.0,140.0 1280.7,144.3" fill="#ffa500"/><polygon points="1278.9,131.8 1283.2,127.5 1287.5,131.8 1283.2,136.1" fill="#ffa500"/><polygon points="1281.4,170.4 1285.7,166.1 1290.0,170.4 1285.7,174.7" fill="#ffa500"/><polygon points="1283.9,179.5 1288.2,175.2 1292.5,179.5 1288.2,183.8" fill="#ffa500"/><polygon points="1286.4,160.9 1290.7,156.6 1295.0,160.9 1290.7,165.2" fill="#ffa500"/><polygon points="1288.9,156.5 1293.2,152.2 1297.5,156.5 1293.2,160.8" fill="#ffa500"/><polygon points="1291.4,186.4 1295.7,182.1 1300.0,186.4 1295.7,190.7" fill="#ffa500"/><polygon points="1293.9,119.1 1298.2,114.8 1302.5,119.1 1298.2,123.4" fill="#ffa500"/><polygon points="1296.4,159.1 1300.7,154.8 1305.0,159.1 1300.7,163.4" fill="#ffa500"/><polygon points="1298.9,170.4 1303.2,166.1 1307.5,170.4 1303.2,174.7" fill="#ffa500"/><polygon points="1301.4,136.5 1305.7,132.2 1310.0,136.5 1305.7,140.8" fill="#ffa500"/><polygon points="1303.9,138.3 1308.2,134.0 1312.5,138.3 1308.2,142.6" fill="#ffa500"/><polygon points="1306.4,160.0 1310.7,155.7 1315.0,160.0 1310.7,164.3" fill="#ffa500"/><polygon points="1308.9,157.4 1313.2,153.1 1317.5,157.4 1313.2,161.7" fill="#ffa500"/><polygon points="1311.4,155.7 1315.7,151.4 1320.0,155.7 1315.7,160.0" fill="#ffa500"/><polygon points="1313.9,190.4 1318.2,186.1 1322.5,190.4 1318.2,194.7" fill="#ffa500"/><polygon points="1316.4,167.0 1320.7,162.7 1325.0,167.0 1320.7,171.3" fill="#ffa500"/><polygon points="1318.9,146.1 1323.2,141.8 1327.5,146.1 1323.2,150.4" fill="#ffa500"/><polygon points="1321.4,154.4 1325.7,150.1 1330.0,154.4 1325.7,158.7" fill="#ffa500"/><polygon points="1323.9,135.3 1328.2,131.0 1332.5,135.3 1328.2,139.6" fill="#ffa500"/><polygon points="1326.4,142.6 1330.7,138.3 1335.0,142.6 1330.7,146.9" fill="#ffa500"/><polygon points="1328.9,143.0 1333.2,138.7 1337.5,143.0 1333.2,147.3" fill="#ffa500"/><polygon points="1331.4,160.5 1335.7,156.2 1340.0,160.5 1335.7,164.8" fill="#ffa500"/><polygon points="1333.9,144.8 1338.2,140.5 1342.5,144.8 1338.2,149.1" fill="#ffa500"/><polygon points="1336.4,139.0 1340.7,134.7 1345.0,139.0 1340.7,143.3" fill="#ffa500"/><polygon points="1338.9,189.1 1343.2,184.8 1347.5,189.1 1343.2,193.4" fill="#ffa500"/><polygon points="1341.4,150.1 1345.7,145.8 1350.0,150.1 1345.7,154.4" fill="#ffa500"/><polygon points="1343.9,222.0 1348.2,217.7 1352.5,222.0 1348.2,226.3" fill="#ffa500"/><polygon points="1346.4,195.8 1350.7,191.5 1355.0,195.8 1350.7,200.1" fill="#ffa500"/><polygon points="1348.9,115.3 1353.2,111.0 1357.5,115.3 1353.2,119.6" fill="#ffa500"/><polygon points="1351.4,153.7 1355.7,149.4 1360.0,153.7 1355.7,158.0" fill="#ffa500"/><polygon points="1353.9,163.9 1358.2,159.6 1362.5,163.9 1358.2,168.2" fill="#ffa500"/><polygon points="1356.4,113.1 1360.7,108.8 1365.0,113.1 1360.7,117.4" fill="#ffa500"/><polygon points="1358.9,143.0 1363.2,138.7 1367.5,143.0 1363.2,147.3" fill="#ffa500"/><polygon points="1361.4,177.9 1365.7,173.6 1370.0,177.9 1365.7,182.2" fill="#ffa500"/><polygon points="1363.9,177.0 1368.2,172.7 1372.5,177.0 1368.2,181.3" fill="#ffa500"/><polygon points="1366.4,225.3 1370.7,221.0 1375.0,225.3 1370.7,229.6" fill="#ffa500"/><polygon points="1368.9,179.7 1373.2,175.4 1377.5,179.7 1373.2,184.0" fill="#ffa500"/><polygon points="1371.4,130.5 1375.7,126.2 1380.0,130.5 1375.7,134.8" fill="#ffa500"/><polygon points="1373.9,177.9 1378.2,173.6 1382.5,177.9 1378.2,182.2" fill="#ffa500"/><polygon points="1376.4,160.5 1380.7,156.2 1385.0,160.5 1380.7,164.8" fill="#ffa500"/><polygon points="1378.9,175.2 1383.2,170.9 1387.5,175.2 1383.2,179.5" fill="#ffa500"/><polygon points="1381.4,130.5 1385.7,126.2 1390.0,130.5 1385.7,134.8" fill="#ffa500"/><polygon points="1383.9,146.9 1388.2,142.6 1392.5,146.9 1388.2,151.2" fill="#ffa500"/><polygon points="1386.4,160.5 1390.7,156.2 1395.0,160.5 1390.7,164.8" fill="#ffa500"/><polygon points="1388.9,133.1 1393.2,128.8 1397.5,133.1 1393.2,137.4" fill="#ffa500"/><polygon points="1391.4,84.3 1395.7,80.0 1400.0,84.3 1395.7,88.6" fill="#ffa500"/><polygon points="1393.9,130.5 1398.2,126.2 1402.5,130.5 1398.2,134.8" fill="#ffa500"/><polygon points="1396.4,194.0 1400.7,189.7 1405.0,194.0 1400.7,198.3" fill="#ffa500"/><polygon points="1398.9,148.0 1403.2,143.7 1407.5,148.0 1403.2,152.3" fill="#ffa500"/><polygon points="1401.4,181.8 1405.7,177.5 1410.0,181.8 1405.7,186.1" fill="#ffa500"/><polygon points="1403.9,139.0 1408.2,134.7 1412.5,139.0 1408.2,143.3" fill="#ffa500"/><polygon points="1406.4,115.3 1410.7,111.0 1415.0,115.3 1410.7,119.6" fill="#ffa500"/><polygon points="1408.9,137.6 1413.2,133.3 1417.5,137.6 1413.2,141.9" fill="#ffa500"/><polygon points="1411.4,130.5 1415.7,126.2 1420.0,130.5 1415.7,134.8" fill="#ffa500"/><polygon points="1413.9,172.5 1418.2,168.2 1422.5,172.5 1418.2,176.8" fill="#ffa500"/><polygon points="1416.4,166.6 1420.7,162.3 1425.0,166.6 1420.7,170.9" fill="#ffa500"/><polygon points="1418.9,236.9 1423.2,232.6 1427.5,236.9 1423.2,241.2" fill="#ffa500"/><polygon points="1421.4,158.7 1425.7,154.4 1430.0,158.7 1425.7,163.0" fill="#ffa500"/><polygon points="1423.9,139.0 1428.2,134.7 1432.5,139.0 1428.2,143.3" fill="#ffa500"/><polygon points="1426.4,204.2 1430.7,199.9 1435.0,204.2 1430.7,208.5" fill="#ffa500"/><polygon points="1428.9,155.5 1433.2,151.2 1437.5,155.5 1433.2,159.8" fill="#ffa500"/><polygon points="1431.4,160.5 1435.7,156.2 1440.0,160.5 1435.7,164.8" fill="#ffa500"/><polygon points="1433.9,188.1 1438.2,183.8 1442.5,188.1 1438.2,192.4" fill="#ffa500"/><polygon points="1436.4,198.1 1440.7,193.8 1445.0,198.1 1440.7,202.4" fill="#ffa500"/><polygon points="1438.9,198.1 1443.2,193.8 1447.5,198.1 1443.2,202.4" fill="#ffa500"/><polygon points="1441.4,198.1 1445.7,193.8 1450.0,198.1 1445.7,202.4" fill="#ffa500"/><polygon points="1443.9,146.6 1448.2,142.3 1452.5,146.6 1448.2,150.9" fill="#ffa500"/><polygon points="1446.4,186.8 1450.7,182.5 1455.0,186.8 1450.7,191.1" fill="#ffa500"/><polygon points="1448.9,136.7 1453.2,132.4 1457.5,136.7 1453.2,141.0" fill="#ffa500"/><polygon points="1451.4,188.1 1455.7,183.8 1460.0,188.1 1455.7,192.4" fill="#ffa500"/><polygon points="1453.9,165.3 1458.2,161.0 1462.5,165.3 1458.2,169.6" fill="#ffa500"/><polygon points="1456.4,168.0 1460.7,163.7 1465.0,168.0 1460.7,172.3" fill="#ffa500"/><polygon points="1458.9,170.7 1463.2,166.4 1467.5,170.7 1463.2,175.0" fill="#ffa500"/><polygon points="1461.4,174.3 1465.7,170.0 1470.0,174.3 1465.7,178.6" fill="#ffa500"/><polygon points="1463.9,160.5 1468.2,156.2 1472.5,160.5 1468.2,164.8" fill="#ffa500"/><polygon points="1466.4,148.0 1470.7,143.7 1475.0,148.0 1470.7,152.3" fill="#ffa500"/><polygon points="1468.9,183.2 1473.2,178.9 1477.5,183.2 1473.2,187.5" fill="#ffa500"/><polygon points="1471.4,168.0 1475.7,163.7 1480.0,168.0 1475.7,172.3" fill="#ffa500"/><polygon points="1473.9,135.5 1478.2,131.2 1482.5,135.5 1478.2,139.8" fill="#ffa500"/><polygon points="1476.4,193.1 1480.7,188.8 1485.0,193.1 1480.7,197.4" fill="#ffa500"/><polygon points="1478.9,189.5 1483.2,185.2 1487.5,189.5 1483.2,193.8" fill="#ffa500"/><polygon points="1481.4,121.9 1485.7,117.6 1490.0,121.9 1485.7,126.2" fill="#ffa500"/><polygon points="1483.9,143.0 1488.2,138.7 1492.5,143.0 1488.2,147.3" fill="#ffa500"/><polygon points="1486.4,168.0 1490.7,163.7 1495.0,168.0 1490.7,172.3" fill="#ffa500"/><polygon points="1488.9,171.6 1493.2,167.3 1497.5,171.6 1493.2,175.9" fill="#ffa500"/><polygon points="1491.4,164.4 1495.7,160.1 1500.0,164.4 1495.7,168.7" fill="#ffa500"/><polygon points="1493.9,163.6 1498.2,159.3 1502.5,163.6 1498.2,167.9" fill="#ffa500"/><polygon points="1496.4,165.3 1500.7,161.0 1505.0,165.3 1500.7,169.6" fill="#ffa500"/><polygon points="1498.9,156.9 1503.2,152.6 1507.5,156.9 1503.2,161.2" fill="#ffa500"/><polygon points="1501.4,143.0 1505.7,138.7 1510.0,143.0 1505.7,147.3" fill="#ffa500"/><polygon points="1503.9,157.3 1508.2,153.0 1512.5,157.3 1508.2,161.6" fill="#ffa500"/><polygon points="1506.4,163.0 1510.7,158.7 1515.0,163.0 1510.7,167.3" fill="#ffa500"/><polygon points="1508.9,142.6 1513.2,138.3 1517.5,142.6 1513.2,146.9" fill="#ffa500"/><polygon points="1511.4,140.3 1515.7,136.0 1520.0,140.3 1515.7,144.6" fill="#ffa500"/><polygon points="1513.9,205.6 1518.2,201.3 1522.5,205.6 1518.2,209.9" fill="#ffa500"/><polygon points="1516.4,208.3 1520.7,204.0 1525.0,208.3 1520.7,212.6" fill="#ffa500"/><polygon points="1518.9,198.1 1523.2,193.8 1527.5,198.1 1523.2,202.4" fill="#ffa500"/><polygon points="1521.4,159.1 1525.7,154.8 1530.0,159.1 1525.7,163.4" fill="#ffa500"/><polygon points="1523.9,168.9 1528.2,164.6 1532.5,168.9 1528.2,173.2" fill="#ffa500"/><polygon points="1526.4,197.0 1530.7,192.7 1535.0,197.0 1530.7,201.3" fill="#ffa500"/><polygon points="1528.9,186.8 1533.2,182.5 1537.5,186.8 1533.2,191.1" fill="#ffa500"/><polygon points="1531.4,173.0 1535.7,168.7 1540.0,173.0 1535.7,177.3" fill="#ffa500"/><polygon points="1533.9,209.2 1538.2,204.9 1542.5,209.2 1538.2,213.5" fill="#ffa500"/><polygon points="1536.4,185.0 1540.7,180.7 1545.0,185.0 1540.7,189.3" fill="#ffa500"/><polygon points="1538.9,195.8 1543.2,191.5 1547.5,195.8 1543.2,200.1" fill="#ffa500"/><polygon points="1541.4,139.0 1545.7,134.7 1550.0,139.0 1545.7,143.3" fill="#ffa500"/><polygon points="1543.9,179.1 1548.2,174.8 1552.5,179.1 1548.2,183.4" fill="#ffa500"/><polygon points="1546.4,138.0 1550.7,133.7 1555.0,138.0 1550.7,142.3" fill="#ffa500"/><polygon points="1548.9,155.1 1553.2,150.8 1557.5,155.1 1553.2,159.4" fill="#ffa500"/><polygon points="1551.4,211.9 1555.7,207.6 1560.0,211.9 1555.7,216.2" fill="#ffa500"/><polygon points="1553.9,167.1 1558.2,162.8 1562.5,167.1 1558.2,171.4" fill="#ffa500"/><polygon points="1556.4,192.2 1560.7,187.9 1565.0,192.2 1560.7,196.5" fill="#ffa500"/><polygon points="1558.9,125.4 1563.2,121.1 1567.5,125.4 1563.2,129.7" fill="#ffa500"/><polygon points="1561.4,212.7 1565.7,208.4 1570.0,212.7 1565.7,217.0" fill="#ffa500"/><polygon points="1563.9,193.1 1568.2,188.8 1572.5,193.1 1568.2,197.4" fill="#ffa500"/><polygon points="1566.4,173.7 1570.7,169.4 1575.0,173.7 1570.7,178.0" fill="#ffa500"/><polygon points="1568.9,182.3 1573.2,178.0 1577.5,182.3 1573.2,186.6" fill="#ffa500"/><polygon points="1571.4,178.8 1575.7,174.5 1580.0,178.8 1575.7,183.1" fill="#ffa500"/><polygon points="1573.9,156.9 1578.2,152.6 1582.5,156.9 1578.2,161.2" fill="#ffa500"/><polygon points="1576.4,162.3 1580.7,158.0 1585.0,162.3 1580.7,166.6" fill="#ffa500"/><polygon points="1578.9,146.9 1583.2,142.6 1587.5,146.9 1583.2,151.2" fill="#ffa500"/><polygon points="1581.4,175.5 1585.7,171.2 1590.0,175.5 1585.7,179.8" fill="#ffa500"/><polygon points="1583.9,211.9 1588.2,207.6 1592.5,211.9 1588.2,216.2" fill="#ffa500"/><polygon points="1586.4,185.6 1590.7,181.3 1595.0,185.6 1590.7,189.9" fill="#ffa500"/><polygon points="1588.9,174.3 1593.2,170.0 1597.5,174.3 1593.2,178.6" fill="#ffa500"/><polygon points="1591.4,146.6 1595.7,142.3 1600.0,146.6 1595.7,150.9" fill="#ffa500"/><polygon points="1593.9,144.4 1598.2,140.1 1602.5,144.4 1598.2,148.7" fill="#ffa500"/><polygon points="1596.4,177.0 1600.7,172.7 1605.0,177.0 1600.7,181.3" fill="#ffa500"/><polygon points="1598.9,150.1 1603.2,145.8 1607.5,150.1 1603.2,154.4" fill="#ffa500"/><polygon points="1601.4,170.7 1605.7,166.4 1610.0,170.7 1605.7,175.0" fill="#ffa500"/><polygon points="1603.9,152.8 1608.2,148.5 1612.5,152.8 1608.2,157.1" fill="#ffa500"/><polygon points="1606.4,133.1 1610.7,128.8 1615.0,133.1 1610.7,137.4" fill="#ffa500"/><polygon points="1608.9,144.4 1613.2,140.1 1617.5,144.4 1613.2,148.7" fill="#ffa500"/><polygon points="1611.4,190.4 1615.7,186.1 1620.0,190.4 1615.7,194.7" fill="#ffa500"/><polygon points="1613.9,177.9 1618.2,173.6 1622.5,177.9 1618.2,182.2" fill="#ffa500"/><polygon points="1616.4,175.2 1620.7,170.9 1625.0,175.2 1620.7,179.5" fill="#ffa500"/><polygon points="1618.9,156.9 1623.2,152.6 1627.5,156.9 1623.2,161.2" fill="#ffa500"/><polygon points="1621.4,182.3 1625.7,178.0 1630.0,182.3 1625.7,186.6" fill="#ffa500"/><polygon points="1623.9,186.8 1628.2,182.5 1632.5,186.8 1628.2,191.1" fill="#ffa500"/><polygon points="1626.4,122.9 1630.7,118.6 1635.0,122.9 1630.7,127.2" fill="#ffa500"/><polygon points="1628.9,126.9 1633.2,122.6 1637.5,126.9 1633.2,131.2" fill="#ffa500"/><polygon points="1631.4,175.5 1635.7,171.2 1640.0,175.5 1635.7,179.8" fill="#ffa500"/><polygon points="1633.9,140.3 1638.2,136.0 1642.5,140.3 1638.2,144.6" fill="#ffa500"/><polygon points="1636.4,174.3 1640.7,170.0 1645.0,174.3 1640.7,178.6" fill="#ffa500"/><polygon points="1638.9,135.5 1643.2,131.2 1647.5,135.5 1643.2,139.8" fill="#ffa500"/><polygon points="1641.4,121.9 1645.7,117.6 1650.0,121.9 1645.7,126.2" fill="#ffa500"/><polygon points="1643.9,168.9 1648.2,164.6 1652.5,168.9 1648.2,173.2" fill="#ffa500"/><polygon points="1646.4,154.1 1650.7,149.8 1655.0,154.1 1650.7,158.4" fill="#ffa500"/><polygon points="1648.9,162.3 1653.2,158.0 1657.5,162.3 1653.2,166.6" fill="#ffa500"/><polygon points="1651.4,146.9 1655.7,142.6 1660.0,146.9 1655.7,151.2" fill="#ffa500"/><polygon points="1653.9,152.8 1658.2,148.5 1662.5,152.8 1658.2,157.1" fill="#ffa500"/><polygon points="1656.4,173.0 1660.7,168.7 1665.0,173.0 1660.7,177.3" fill="#ffa500"/><polygon points="1658.9,135.8 1663.2,131.5 1667.5,135.8 1663.2,140.1" fill="#ffa500"/><polyline points="1218.2,494.5 1220.7,496.2 1223.2,494.1 1225.7,497.4 1228.2,504.8 1230.7,494.1 1233.2,497.4 1235.7,496.2 1238.2,488.0 1240.7,491.7 1243.2,494.9 1245.7,499.0 1248.2,507.2 1250.7,501.9 1253.2,494.5 1255.7,491.7 1258.2,494.1 1260.7,509.7 1263.2,493.3 1265.7,501.9 1268.2,500.3 1270.7,497.8 1273.2,507.2 1275.7,492.9 1278.2,503.5 1280.7,514.6 1283.2,501.1 1285.7,491.7 1288.2,494.5 1290.7,502.7 1293.2,494.1 1295.7,497.8 1298.2,503.1 1300.7,486.8 1303.2,495.4 1305.7,497.8 1308.2,494.1 1310.7,505.6 1313.2,493.3 1315.7,499.0 1318.2,493.3 1320.7,517.0 1323.2,493.7 1325.7,490.0 1328.2,493.7 1330.7,497.4 1333.2,499.9 1335.7,497.8 1338.2,489.2 1340.7,504.4 1343.2,483.1 1345.7,512.1 1348.2,503.5 1350.7,501.5 1353.2,485.5 1355.7,494.5 1358.2,497.0 1360.7,510.9 1363.2,494.5 1365.7,491.7 1368.2,489.2 1370.7,500.7 1373.2,492.5 1375.7,505.6 1378.2,490.0 1380.7,497.0 1383.2,502.7 1385.7,497.0 1388.2,500.7 1390.7,508.4 1393.2,493.3 1395.7,497.4 1398.2,498.6 1400.7,505.6 1403.2,486.0 1405.7,498.2 1408.2,489.6 1410.7,505.6 1413.2,495.4 1415.7,498.2 1418.2,493.7 1420.7,504.4 1423.2,498.2 1425.7,506.0 1428.2,501.5 1430.7,498.6 1433.2,501.5 1435.7,495.4 1438.2,508.0 1440.7,494.9 1443.2,502.7 1445.7,503.1 1448.2,504.4 1450.7,502.3 1453.2,502.7 1455.7,494.9 1458.2,492.5 1460.7,499.0 1463.2,496.2 1465.7,499.9 1468.2,495.4 1470.7,497.8 1473.2,506.4 1475.7,495.4 1478.2,513.4 1480.7,500.7 1483.2,502.3 1485.7,497.4 1488.2,492.9 1490.7,535.4 1493.2,537.9 1495.7,535.0 1498.2,541.2 1500.7,537.9 1503.2,531.8 1505.7,513.4 1508.2,496.6 1510.7,499.4 1513.2,489.2 1515.7,502.3 1518.2,499.4 1520.7,503.9 1523.2,514.6 1525.7,515.0 1528.2,509.3 1530.7,502.7 1533.2,491.7 1535.7,493.3 1538.2,501.1 1540.7,498.6 1543.2,503.1 1545.7,494.5 1548.2,501.9 1550.7,499.9 1553.2,486.8 1555.7,501.9 1558.2,505.2 1560.7,502.7 1563.2,506.8 1565.7,499.0 1568.2,502.7 1570.7,497.8 1573.2,487.6 1575.7,492.9 1578.2,504.4 1580.7,494.5 1583.2,497.0 1585.7,493.7 1588.2,490.0 1590.7,499.4 1593.2,489.2 1595.7,506.8 1598.2,496.6 1600.7,491.7 1603.2,504.4 1605.7,506.0 1608.2,497.8 1610.7,498.2 1613.2,501.1 1615.7,488.0 1618.2,479.0 1620.7,499.4 1623.2,494.5 1625.7,485.1 1628.2,497.0 1630.7,502.3 1633.2,503.5 1635.7,494.5 1638.2,489.6 1640.7,497.0 1643.2,498.6 1645.7,497.8 1648.2,500.7 1650.7,496.6 1653.2,494.5 1655.7,500.3 1658.2,500.3 1660.7,498.6 1663.2,495.4" fill="none" stroke="#8888ff" stroke-width="2.2"/><polyline points="1218.2,494.5 1220.7,496.2 1223.2,494.1 1225.7,497.4 1228.2,504.8 1230.7,494.1 1233.2,497.4 1235.7,496.2 1238.2,488.0 1240.7,491.7 1243.2,494.9 1245.7,499.0 1248.2,507.2 1250.7,501.9 1253.2,494.5 1255.7,491.7 1258.2,494.1 1260.7,509.7 1263.2,493.3 1265.7,501.9 1268.2,500.3 1270.7,497.8 1273.2,507.2 1275.7,492.9 1278.2,503.5 1280.7,514.6 1283.2,501.1 1285.7,491.7 1288.2,494.5 1290.7,502.7 1293.2,494.1 1295.7,497.8 1298.2,503.1 1300.7,486.8 1303.2,495.4 1305.7,497.8 1308.2,494.1 1310.7,505.6 1313.2,493.3 1315.7,499.0 1318.2,493.3 1320.7,517.0 1323.2,493.7 1325.7,490.0 1328.2,493.7 1330.7,497.4 1333.2,499.9 1335.7,497.8 1338.2,489.2 1340.7,504.4 1343.2,483.1 1345.7,512.1 1348.2,503.5 1350.7,501.5 1353.2,485.5 1355.7,494.5 1358.2,497.0 1360.7,510.9 1363.2,494.5 1365.7,491.7 1368.2,489.2 1370.7,500.7 1373.2,492.5 1375.7,505.6 1378.2,490.0 1380.7,497.0 1383.2,502.7 1385.7,497.0 1388.2,500.7 1390.7,508.4 1393.2,493.3 1395.7,497.4 1398.2,498.6 1400.7,505.6 1403.2,486.0 1405.7,498.2 1408.2,489.6 1410.7,505.6 1413.2,495.4 1415.7,498.2 1418.2,493.7 1420.7,504.4 1423.2,498.2 1425.7,506.0 1428.2,501.5 1430.7,498.6 1433.2,501.5 1435.7,495.4 1438.2,508.0 1440.7,494.9 1443.2,502.7 1445.7,503.1 1448.2,504.4 1450.7,502.3 1453.2,502.7 1455.7,494.9 1458.2,492.5 1460.7,499.0 1463.2,496.2 1465.7,499.9 1468.2,495.4 1470.7,497.8 1473.2,506.4 1475.7,495.4 1478.2,513.4 1480.7,500.7 1483.2,502.3 1485.7,497.4 1488.2,492.9 1490.7,535.4 1493.2,537.9 1495.7,535.0 1498.2,541.2 1500.7,537.9 1503.2,531.8 1505.7,513.4 1508.2,496.6 1510.7,499.4 1513.2,489.2 1515.7,502.3 1518.2,499.4 1520.7,503.9 1523.2,514.6 1525.7,515.0 1528.2,509.3 1530.7,502.7 1533.2,491.7 1535.7,493.3 1538.2,501.1 1540.7,498.6 1543.2,503.1 1545.7,494.5 1548.2,501.9 1550.7,499.9 1553.2,486.8 1555.7,501.9 1558.2,505.2 1560.7,502.7 1563.2,506.8 1565.7,499.0 1568.2,502.7 1570.7,497.8 1573.2,487.6 1575.7,492.9 1578.2,504.4 1580.7,494.5 1583.2,497.0 1585.7,493.7 1588.2,490.0 1590.7,499.4 1593.2,489.2 1595.7,506.8 1598.2,496.6 1600.7,491.7 1603.2,504.4 1605.7,506.0 1608.2,497.8 1610.7,498.2 1613.2,501.1 1615.7,488.0 1618.2,479.0 1620.7,499.4 1623.2,494.5 1625.7,485.1 1628.2,497.0 1630.7,502.3 1633.2,503.5 1635.7,494.5 1638.2,489.6 1640.7,497.0 1643.2,498.6 1645.7,497.8 1648.2,500.7 1650.7,496.6 1653.2,494.5 1655.7,500.3 1658.2,500.3 1660.7,498.6 1663.2,495.4" fill="none" stroke="#e8e8ff" stroke-width="0.8"/><polygon points="1214.3,494.5 1218.2,490.6 1222.1,494.5 1218.2,498.4" fill="#0000ff"/><polygon points="1216.8,496.2 1220.7,492.3 1224.6,496.2 1220.7,500.1" fill="#0000ff"/><polygon points="1219.3,494.1 1223.2,490.2 1227.1,494.1 1223.2,498.0" fill="#0000ff"/><polygon points="1221.8,497.4 1225.7,493.5 1229.6,497.4 1225.7,501.3" fill="#0000ff"/><polygon points="1224.3,504.8 1228.2,500.9 1232.1,504.8 1228.2,508.7" fill="#0000ff"/><polygon points="1226.8,494.1 1230.7,490.2 1234.6,494.1 1230.7,498.0" fill="#0000ff"/><polygon points="1229.3,497.4 1233.2,493.5 1237.1,497.4 1233.2,501.3" fill="#0000ff"/><polygon points="1231.8,496.2 1235.7,492.3 1239.6,496.2 1235.7,500.1" fill="#0000ff"/><polygon points="1234.3,488.0 1238.2,484.1 1242.1,488.0 1238.2,491.9" fill="#0000ff"/><polygon points="1236.8,491.7 1240.7,487.8 1244.6,491.7 1240.7,495.6" fill="#0000ff"/><polygon points="1239.3,494.9 1243.2,491.0 1247.1,494.9 1243.2,498.8" fill="#0000ff"/><polygon points="1241.8,499.0 1245.7,495.1 1249.6,499.0 1245.7,502.9" fill="#0000ff"/><polygon points="1244.3,507.2 1248.2,503.3 1252.1,507.2 1248.2,511.1" fill="#0000ff"/><polygon points="1246.8,501.9 1250.7,498.0 1254.6,501.9 1250.7,505.8" fill="#0000ff"/><polygon points="1249.3,494.5 1253.2,490.6 1257.1,494.5 1253.2,498.4" fill="#0000ff"/><polygon points="1251.8,491.7 1255.7,487.8 1259.6,491.7 1255.7,495.6" fill="#0000ff"/><polygon points="1254.3,494.1 1258.2,490.2 1262.1,494.1 1258.2,498.0" fill="#0000ff"/><polygon points="1256.8,509.7 1260.7,505.8 1264.6,509.7 1260.7,513.6" fill="#0000ff"/><polygon points="1259.3,493.3 1263.2,489.4 1267.1,493.3 1263.2,497.2" fill="#0000ff"/><polygon points="1261.8,501.9 1265.7,498.0 1269.6,501.9 1265.7,505.8" fill="#0000ff"/><polygon points="1264.3,500.3 1268.2,496.4 1272.1,500.3 1268.2,504.2" fill="#0000ff"/><polygon points="1266.8,497.8 1270.7,493.9 1274.6,497.8 1270.7,501.7" fill="#0000ff"/><polygon points="1269.3,507.2 1273.2,503.3 1277.1,507.2 1273.2,511.1" fill="#0000ff"/><polygon points="1271.8,492.9 1275.7,489.0 1279.6,492.9 1275.7,496.8" fill="#0000ff"/><polygon points="1274.3,503.5 1278.2,499.6 1282.1,503.5 1278.2,507.4" fill="#0000ff"/><polygon points="1276.8,514.6 1280.7,510.7 1284.6,514.6 1280.7,518.5" fill="#0000ff"/><polygon points="1279.3,501.1 1283.2,497.2 1287.1,501.1 1283.2,505.0" fill="#0000ff"/><polygon points="1281.8,491.7 1285.7,487.8 1289.6,491.7 1285.7,495.6" fill="#0000ff"/><polygon points="1284.3,494.5 1288.2,490.6 1292.1,494.5 1288.2,498.4" fill="#0000ff"/><polygon points="1286.8,502.7 1290.7,498.8 1294.6,502.7 1290.7,506.6" fill="#0000ff"/><polygon points="1289.3,494.1 1293.2,490.2 1297.1,494.1 1293.2,498.0" fill="#0000ff"/><polygon points="1291.8,497.8 1295.7,493.9 1299.6,497.8 1295.7,501.7" fill="#0000ff"/><polygon points="1294.3,503.1 1298.2,499.2 1302.1,503.1 1298.2,507.0" fill="#0000ff"/><polygon points="1296.8,486.8 1300.7,482.9 1304.6,486.8 1300.7,490.7" fill="#0000ff"/><polygon points="1299.3,495.4 1303.2,491.5 1307.1,495.4 1303.2,499.3" fill="#0000ff"/><polygon points="1301.8,497.8 1305.7,493.9 1309.6,497.8 1305.7,501.7" fill="#0000ff"/><polygon points="1304.3,494.1 1308.2,490.2 1312.1,494.1 1308.2,498.0" fill="#0000ff"/><polygon points="1306.8,505.6 1310.7,501.7 1314.6,505.6 1310.7,509.5" fill="#0000ff"/><polygon points="1309.3,493.3 1313.2,489.4 1317.1,493.3 1313.2,497.2" fill="#0000ff"/><polygon points="1311.8,499.0 1315.7,495.1 1319.6,499.0 1315.7,502.9" fill="#0000ff"/><polygon points="1314.3,493.3 1318.2,489.4 1322.1,493.3 1318.2,497.2" fill="#0000ff"/><polygon points="1316.8,517.0 1320.7,513.1 1324.6,517.0 1320.7,520.9" fill="#0000ff"/><polygon points="1319.3,493.7 1323.2,489.8 1327.1,493.7 1323.2,497.6" fill="#0000ff"/><polygon points="1321.8,490.0 1325.7,486.1 1329.6,490.0 1325.7,493.9" fill="#0000ff"/><polygon points="1324.3,493.7 1328.2,489.8 1332.1,493.7 1328.2,497.6" fill="#0000ff"/><polygon points="1326.8,497.4 1330.7,493.5 1334.6,497.4 1330.7,501.3" fill="#0000ff"/><polygon points="1329.3,499.9 1333.2,496.0 1337.1,499.9 1333.2,503.8" fill="#0000ff"/><polygon points="1331.8,497.8 1335.7,493.9 1339.6,497.8 1335.7,501.7" fill="#0000ff"/><polygon points="1334.3,489.2 1338.2,485.3 1342.1,489.2 1338.2,493.1" fill="#0000ff"/><polygon points="1336.8,504.4 1340.7,500.5 1344.6,504.4 1340.7,508.3" fill="#0000ff"/><polygon points="1339.3,483.1 1343.2,479.2 1347.1,483.1 1343.2,487.0" fill="#0000ff"/><polygon points="1341.8,512.1 1345.7,508.2 1349.6,512.1 1345.7,516.0" fill="#0000ff"/><polygon points="1344.3,503.5 1348.2,499.6 1352.1,503.5 1348.2,507.4" fill="#0000ff"/><polygon points="1346.8,501.5 1350.7,497.6 1354.6,501.5 1350.7,505.4" fill="#0000ff"/><polygon points="1349.3,485.5 1353.2,481.6 1357.1,485.5 1353.2,489.4" fill="#0000ff"/><polygon points="1351.8,494.5 1355.7,490.6 1359.6,494.5 1355.7,498.4" fill="#0000ff"/><polygon points="1354.3,497.0 1358.2,493.1 1362.1,497.0 1358.2,500.9" fill="#0000ff"/><polygon points="1356.8,510.9 1360.7,507.0 1364.6,510.9 1360.7,514.8" fill="#0000ff"/><polygon points="1359.3,494.5 1363.2,490.6 1367.1,494.5 1363.2,498.4" fill="#0000ff"/><polygon points="1361.8,491.7 1365.7,487.8 1369.6,491.7 1365.7,495.6" fill="#0000ff"/><polygon points="1364.3,489.2 1368.2,485.3 1372.1,489.2 1368.2,493.1" fill="#0000ff"/><polygon points="1366.8,500.7 1370.7,496.8 1374.6,500.7 1370.7,504.6" fill="#0000ff"/><polygon points="1369.3,492.5 1373.2,488.6 1377.1,492.5 1373.2,496.4" fill="#0000ff"/><polygon points="1371.8,505.6 1375.7,501.7 1379.6,505.6 1375.7,509.5" fill="#0000ff"/><polygon points="1374.3,490.0 1378.2,486.1 1382.1,490.0 1378.2,493.9" fill="#0000ff"/><polygon points="1376.8,497.0 1380.7,493.1 1384.6,497.0 1380.7,500.9" fill="#0000ff"/><polygon points="1379.3,502.7 1383.2,498.8 1387.1,502.7 1383.2,506.6" fill="#0000ff"/><polygon points="1381.8,497.0 1385.7,493.1 1389.6,497.0 1385.7,500.9" fill="#0000ff"/><polygon points="1384.3,500.7 1388.2,496.8 1392.1,500.7 1388.2,504.6" fill="#0000ff"/><polygon points="1386.8,508.4 1390.7,504.5 1394.6,508.4 1390.7,512.3" fill="#0000ff"/><polygon points="1389.3,493.3 1393.2,489.4 1397.1,493.3 1393.2,497.2" fill="#0000ff"/><polygon points="1391.8,497.4 1395.7,493.5 1399.6,497.4 1395.7,501.3" fill="#0000ff"/><polygon points="1394.3,498.6 1398.2,494.7 1402.1,498.6 1398.2,502.5" fill="#0000ff"/><polygon points="1396.8,505.6 1400.7,501.7 1404.6,505.6 1400.7,509.5" fill="#0000ff"/><polygon points="1399.3,486.0 1403.2,482.1 1407.1,486.0 1403.2,489.9" fill="#0000ff"/><polygon points="1401.8,498.2 1405.7,494.3 1409.6,498.2 1405.7,502.1" fill="#0000ff"/><polygon points="1404.3,489.6 1408.2,485.7 1412.1,489.6 1408.2,493.5" fill="#0000ff"/><polygon points="1406.8,505.6 1410.7,501.7 1414.6,505.6 1410.7,509.5" fill="#0000ff"/><polygon points="1409.3,495.4 1413.2,491.5 1417.1,495.4 1413.2,499.3" fill="#0000ff"/><polygon points="1411.8,498.2 1415.7,494.3 1419.6,498.2 1415.7,502.1" fill="#0000ff"/><polygon points="1414.3,493.7 1418.2,489.8 1422.1,493.7 1418.2,497.6" fill="#0000ff"/><polygon points="1416.8,504.4 1420.7,500.5 1424.6,504.4 1420.7,508.3" fill="#0000ff"/><polygon points="1419.3,498.2 1423.2,494.3 1427.1,498.2 1423.2,502.1" fill="#0000ff"/><polygon points="1421.8,506.0 1425.7,502.1 1429.6,506.0 1425.7,509.9" fill="#0000ff"/><polygon points="1424.3,501.5 1428.2,497.6 1432.1,501.5 1428.2,505.4" fill="#0000ff"/><polygon points="1426.8,498.6 1430.7,494.7 1434.6,498.6 1430.7,502.5" fill="#0000ff"/><polygon points="1429.3,501.5 1433.2,497.6 1437.1,501.5 1433.2,505.4" fill="#0000ff"/><polygon points="1431.8,495.4 1435.7,491.5 1439.6,495.4 1435.7,499.3" fill="#0000ff"/><polygon points="1434.3,508.0 1438.2,504.1 1442.1,508.0 1438.2,511.9" fill="#0000ff"/><polygon points="1436.8,494.9 1440.7,491.0 1444.6,494.9 1440.7,498.8" fill="#0000ff"/><polygon points="1439.3,502.7 1443.2,498.8 1447.1,502.7 1443.2,506.6" fill="#0000ff"/><polygon points="1441.8,503.1 1445.7,499.2 1449.6,503.1 1445.7,507.0" fill="#0000ff"/><polygon points="1444.3,504.4 1448.2,500.5 1452.1,504.4 1448.2,508.3" fill="#0000ff"/><polygon points="1446.8,502.3 1450.7,498.4 1454.6,502.3 1450.7,506.2" fill="#0000ff"/><polygon points="1449.3,502.7 1453.2,498.8 1457.1,502.7 1453.2,506.6" fill="#0000ff"/><polygon points="1451.8,494.9 1455.7,491.0 1459.6,494.9 1455.7,498.8" fill="#0000ff"/><polygon points="1454.3,492.5 1458.2,488.6 1462.1,492.5 1458.2,496.4" fill="#0000ff"/><polygon points="1456.8,499.0 1460.7,495.1 1464.6,499.0 1460.7,502.9" fill="#0000ff"/><polygon points="1459.3,496.2 1463.2,492.3 1467.1,496.2 1463.2,500.1" fill="#0000ff"/><polygon points="1461.8,499.9 1465.7,496.0 1469.6,499.9 1465.7,503.8" fill="#0000ff"/><polygon points="1464.3,495.4 1468.2,491.5 1472.1,495.4 1468.2,499.3" fill="#0000ff"/><polygon points="1466.8,497.8 1470.7,493.9 1474.6,497.8 1470.7,501.7" fill="#0000ff"/><polygon points="1469.3,506.4 1473.2,502.5 1477.1,506.4 1473.2,510.3" fill="#0000ff"/><polygon points="1471.8,495.4 1475.7,491.5 1479.6,495.4 1475.7,499.3" fill="#0000ff"/><polygon points="1474.3,513.4 1478.2,509.5 1482.1,513.4 1478.2,517.3" fill="#0000ff"/><polygon points="1476.8,500.7 1480.7,496.8 1484.6,500.7 1480.7,504.6" fill="#0000ff"/><polygon points="1479.3,502.3 1483.2,498.4 1487.1,502.3 1483.2,506.2" fill="#0000ff"/><polygon points="1481.8,497.4 1485.7,493.5 1489.6,497.4 1485.7,501.3" fill="#0000ff"/><polygon points="1484.3,492.9 1488.2,489.0 1492.1,492.9 1488.2,496.8" fill="#0000ff"/><polygon points="1486.8,535.4 1490.7,531.5 1494.6,535.4 1490.7,539.3" fill="#0000ff"/><polygon points="1489.3,537.9 1493.2,534.0 1497.1,537.9 1493.2,541.8" fill="#0000ff"/><polygon points="1491.8,535.0 1495.7,531.1 1499.6,535.0 1495.7,538.9" fill="#0000ff"/><polygon points="1494.3,541.2 1498.2,537.3 1502.1,541.2 1498.2,545.1" fill="#0000ff"/><polygon points="1496.8,537.9 1500.7,534.0 1504.6,537.9 1500.7,541.8" fill="#0000ff"/><polygon points="1499.3,531.8 1503.2,527.9 1507.1,531.8 1503.2,535.7" fill="#0000ff"/><polygon points="1501.8,513.4 1505.7,509.5 1509.6,513.4 1505.7,517.3" fill="#0000ff"/><polygon points="1504.3,496.6 1508.2,492.7 1512.1,496.6 1508.2,500.5" fill="#0000ff"/><polygon points="1506.8,499.4 1510.7,495.5 1514.6,499.4 1510.7,503.3" fill="#0000ff"/><polygon points="1509.3,489.2 1513.2,485.3 1517.1,489.2 1513.2,493.1" fill="#0000ff"/><polygon points="1511.8,502.3 1515.7,498.4 1519.6,502.3 1515.7,506.2" fill="#0000ff"/><polygon points="1514.3,499.4 1518.2,495.5 1522.1,499.4 1518.2,503.3" fill="#0000ff"/><polygon points="1516.8,503.9 1520.7,500.0 1524.6,503.9 1520.7,507.8" fill="#0000ff"/><polygon points="1519.3,514.6 1523.2,510.7 1527.1,514.6 1523.2,518.5" fill="#0000ff"/><polygon points="1521.8,515.0 1525.7,511.1 1529.6,515.0 1525.7,518.9" fill="#0000ff"/><polygon points="1524.3,509.3 1528.2,505.4 1532.1,509.3 1528.2,513.2" fill="#0000ff"/><polygon points="1526.8,502.7 1530.7,498.8 1534.6,502.7 1530.7,506.6" fill="#0000ff"/><polygon points="1529.3,491.7 1533.2,487.8 1537.1,491.7 1533.2,495.6" fill="#0000ff"/><polygon points="1531.8,493.3 1535.7,489.4 1539.6,493.3 1535.7,497.2" fill="#0000ff"/><polygon points="1534.3,501.1 1538.2,497.2 1542.1,501.1 1538.2,505.0" fill="#0000ff"/><polygon points="1536.8,498.6 1540.7,494.7 1544.6,498.6 1540.7,502.5" fill="#0000ff"/><polygon points="1539.3,503.1 1543.2,499.2 1547.1,503.1 1543.2,507.0" fill="#0000ff"/><polygon points="1541.8,494.5 1545.7,490.6 1549.6,494.5 1545.7,498.4" fill="#0000ff"/><polygon points="1544.3,501.9 1548.2,498.0 1552.1,501.9 1548.2,505.8" fill="#0000ff"/><polygon points="1546.8,499.9 1550.7,496.0 1554.6,499.9 1550.7,503.8" fill="#0000ff"/><polygon points="1549.3,486.8 1553.2,482.9 1557.1,486.8 1553.2,490.7" fill="#0000ff"/><polygon points="1551.8,501.9 1555.7,498.0 1559.6,501.9 1555.7,505.8" fill="#0000ff"/><polygon points="1554.3,505.2 1558.2,501.3 1562.1,505.2 1558.2,509.1" fill="#0000ff"/><polygon points="1556.8,502.7 1560.7,498.8 1564.6,502.7 1560.7,506.6" fill="#0000ff"/><polygon points="1559.3,506.8 1563.2,502.9 1567.1,506.8 1563.2,510.7" fill="#0000ff"/><polygon points="1561.8,499.0 1565.7,495.1 1569.6,499.0 1565.7,502.9" fill="#0000ff"/><polygon points="1564.3,502.7 1568.2,498.8 1572.1,502.7 1568.2,506.6" fill="#0000ff"/><polygon points="1566.8,497.8 1570.7,493.9 1574.6,497.8 1570.7,501.7" fill="#0000ff"/><polygon points="1569.3,487.6 1573.2,483.7 1577.1,487.6 1573.2,491.5" fill="#0000ff"/><polygon points="1571.8,492.9 1575.7,489.0 1579.6,492.9 1575.7,496.8" fill="#0000ff"/><polygon points="1574.3,504.4 1578.2,500.5 1582.1,504.4 1578.2,508.3" fill="#0000ff"/><polygon points="1576.8,494.5 1580.7,490.6 1584.6,494.5 1580.7,498.4" fill="#0000ff"/><polygon points="1579.3,497.0 1583.2,493.1 1587.1,497.0 1583.2,500.9" fill="#0000ff"/><polygon points="1581.8,493.7 1585.7,489.8 1589.6,493.7 1585.7,497.6" fill="#0000ff"/><polygon points="1584.3,490.0 1588.2,486.1 1592.1,490.0 1588.2,493.9" fill="#0000ff"/><polygon points="1586.8,499.4 1590.7,495.5 1594.6,499.4 1590.7,503.3" fill="#0000ff"/><polygon points="1589.3,489.2 1593.2,485.3 1597.1,489.2 1593.2,493.1" fill="#0000ff"/><polygon points="1591.8,506.8 1595.7,502.9 1599.6,506.8 1595.7,510.7" fill="#0000ff"/><polygon points="1594.3,496.6 1598.2,492.7 1602.1,496.6 1598.2,500.5" fill="#0000ff"/><polygon points="1596.8,491.7 1600.7,487.8 1604.6,491.7 1600.7,495.6" fill="#0000ff"/><polygon points="1599.3,504.4 1603.2,500.5 1607.1,504.4 1603.2,508.3" fill="#0000ff"/><polygon points="1601.8,506.0 1605.7,502.1 1609.6,506.0 1605.7,509.9" fill="#0000ff"/><polygon points="1604.3,497.8 1608.2,493.9 1612.1,497.8 1608.2,501.7" fill="#0000ff"/><polygon points="1606.8,498.2 1610.7,494.3 1614.6,498.2 1610.7,502.1" fill="#0000ff"/><polygon points="1609.3,501.1 1613.2,497.2 1617.1,501.1 1613.2,505.0" fill="#0000ff"/><polygon points="1611.8,488.0 1615.7,484.1 1619.6,488.0 1615.7,491.9" fill="#0000ff"/><polygon points="1614.3,479.0 1618.2,475.1 1622.1,479.0 1618.2,482.9" fill="#0000ff"/><polygon points="1616.8,499.4 1620.7,495.5 1624.6,499.4 1620.7,503.3" fill="#0000ff"/><polygon points="1619.3,494.5 1623.2,490.6 1627.1,494.5 1623.2,498.4" fill="#0000ff"/><polygon points="1621.8,485.1 1625.7,481.2 1629.6,485.1 1625.7,489.0" fill="#0000ff"/><polygon points="1624.3,497.0 1628.2,493.1 1632.1,497.0 1628.2,500.9" fill="#0000ff"/><polygon points="1626.8,502.3 1630.7,498.4 1634.6,502.3 1630.7,506.2" fill="#0000ff"/><polygon points="1629.3,503.5 1633.2,499.6 1637.1,503.5 1633.2,507.4" fill="#0000ff"/><polygon points="1631.8,494.5 1635.7,490.6 1639.6,494.5 1635.7,498.4" fill="#0000ff"/><polygon points="1634.3,489.6 1638.2,485.7 1642.1,489.6 1638.2,493.5" fill="#0000ff"/><polygon points="1636.8,497.0 1640.7,493.1 1644.6,497.0 1640.7,500.9" fill="#0000ff"/><polygon points="1639.3,498.6 1643.2,494.7 1647.1,498.6 1643.2,502.5" fill="#0000ff"/><polygon points="1641.8,497.8 1645.7,493.9 1649.6,497.8 1645.7,501.7" fill="#0000ff"/><polygon points="1644.3,500.7 1648.2,496.8 1652.1,500.7 1648.2,504.6" fill="#0000ff"/><polygon points="1646.8,496.6 1650.7,492.7 1654.6,496.6 1650.7,500.5" fill="#0000ff"/><polygon points="1649.3,494.5 1653.2,490.6 1657.1,494.5 1653.2,498.4" fill="#0000ff"/><polygon points="1651.8,500.3 1655.7,496.4 1659.6,500.3 1655.7,504.2" fill="#0000ff"/><polygon points="1654.3,500.3 1658.2,496.4 1662.1,500.3 1658.2,504.2" fill="#0000ff"/><polygon points="1656.8,498.6 1660.7,494.7 1664.6,498.6 1660.7,502.5" fill="#0000ff"/><polygon points="1659.3,495.4 1663.2,491.5 1667.1,495.4 1663.2,499.3" fill="#0000ff"/></svg>
<span class="t" style="left:1176px;top:169.10px;font-size:15px;line-height:15px;color:#111;transform:scaleX(0.8390);">3000</span>
<span class="t" style="left:1176px;top:289.10px;font-size:15px;line-height:15px;color:#111;transform:scaleX(0.8390);">2000</span>
<span class="t" style="left:1176px;top:409.10px;font-size:15px;line-height:15px;color:#111;transform:scaleX(0.8390);">1000</span>
<span class="t" style="left:1208px;top:528.10px;font-size:15px;line-height:15px;color:#111;transform:scaleX(0.7790);">0</span>
<span class="t" style="left:1221px;top:546.30px;font-size:15px;line-height:15px;color:#111;transform:scaleX(0.8190);">300</span>
<span class="t" style="left:1296px;top:546.30px;font-size:15px;line-height:15px;color:#111;transform:scaleX(0.8190);">330</span>
<span class="t" style="left:1371px;top:546.30px;font-size:15px;line-height:15px;color:#111;transform:scaleX(0.8190);">360</span>
<span class="t" style="left:1446px;top:546.30px;font-size:15px;line-height:15px;color:#111;transform:scaleX(0.8190);">390</span>
<span class="t" style="left:1521px;top:546.30px;font-size:15px;line-height:15px;color:#111;transform:scaleX(0.8190);">420</span>
<span class="t" style="left:1596px;top:546.30px;font-size:15px;line-height:15px;color:#111;transform:scaleX(0.8190);">450</span>
<div style="left:1145px;top:597px;width:750px;height:1px;background:#fff;"></div>
<span class="t" style="left:1154px;top:603.69px;font-size:14.9px;line-height:14.9px;color:#000;transform:scaleX(1.0168);">Current-</span>
<span class="t" style="left:1165px;top:623.69px;font-size:14.9px;line-height:14.9px;color:#000;transform:scaleX(0.9152);">Frame</span>
<span class="t" style="left:1230px;top:603.69px;font-size:14.9px;line-height:14.9px;color:#000;transform:scaleX(0.9226);">Luminous</span>
<span class="t" style="left:1230px;top:623.69px;font-size:14.9px;line-height:14.9px;color:#000;transform:scaleX(0.9831);">Intensity</span>
<div style="left:1155px;top:644px;width:60px;height:24px;background:#fff;border-style:solid;border-width:1px;border-color:#a0a0a0 #fff #fff #a0a0a0;box-shadow:inset 1px 1px 0 #696969;"></div>
<div style="left:1225px;top:644px;width:71px;height:24px;background:#fff;border-style:solid;border-width:1px;border-color:#a0a0a0 #fff #fff #a0a0a0;box-shadow:inset 1px 1px 0 #696969;"></div>
<div style="left:1304px;top:606px;width:200px;height:22px;background:#f7f7f7;border-top:1px solid #a0a0a0;"></div>
<div style="left:1304px;top:606px;width:25px;height:22px;background:#f0f0f0;border-style:solid;border-width:1px;border-color:#fff #696969 #696969 #fff;box-shadow:inset -1px -1px 0 #a0a0a0;"></div>
<svg style="position:absolute;left:0;top:0;overflow:visible" width="1" height="1"><polygon points="1318.5,613.0 1318.5,621.0 1314.5,617.0" fill="#a0a0a0"/></svg>
<div style="left:1479px;top:606px;width:25px;height:22px;background:#f0f0f0;border-style:solid;border-width:1px;border-color:#fff #696969 #696969 #fff;box-shadow:inset -1px -1px 0 #a0a0a0;"></div>
<svg style="position:absolute;left:0;top:0;overflow:visible" width="1" height="1"><polygon points="1489.5,613.0 1489.5,621.0 1493.5,617.0" fill="#a0a0a0"/></svg>
<div style="left:1305px;top:638px;width:52px;height:30px;background:#f0f0f0;border-style:solid;border-width:1px;border-color:#fff #696969 #696969 #fff;box-shadow:inset -1px -1px 0 #a0a0a0;"></div>
<span class="t" style="left:1310.0px;top:643.17px;font-size:16.1px;line-height:16.1px;color:#a0a0a0;transform:scaleX(0.8285);">-10Sec</span>
<div style="left:1360px;top:638px;width:41px;height:30px;background:#f0f0f0;border-style:solid;border-width:1px;border-color:#fff #696969 #696969 #fff;box-shadow:inset -1px -1px 0 #a0a0a0;"></div>
<span class="t" style="left:1364.0px;top:643.17px;font-size:16.1px;line-height:16.1px;color:#a0a0a0;transform:scaleX(0.7895);">-1Sec</span>
<div style="left:1405px;top:638px;width:44px;height:30px;background:#f0f0f0;border-style:solid;border-width:1px;border-color:#fff #696969 #696969 #fff;box-shadow:inset -1px -1px 0 #a0a0a0;"></div>
<span class="t" style="left:1408.0px;top:643.17px;font-size:16.1px;line-height:16.1px;color:#a0a0a0;transform:scaleX(0.8295);">+1Sec</span>
<div style="left:1453px;top:638px;width:51px;height:30px;background:#f0f0f0;border-style:solid;border-width:1px;border-color:#fff #696969 #696969 #fff;box-shadow:inset -1px -1px 0 #a0a0a0;"></div>
<span class="t" style="left:1456.0px;top:643.17px;font-size:16.1px;line-height:16.1px;color:#a0a0a0;transform:scaleX(0.8225);">+10Sec</span>
<span class="t" style="left:1512px;top:613.69px;font-size:14.9px;line-height:14.9px;color:#000;transform:scaleX(0.9214);">Scale</span>
<div style="left:1560px;top:604px;width:28px;height:24px;background:#fff;border-style:solid;border-width:1px;border-color:#a0a0a0 #fff #fff #a0a0a0;box-shadow:inset 1px 1px 0 #696969;"></div>
<span class="t" style="left:1563px;top:607.19px;font-size:14.9px;line-height:14.9px;color:#000;transform:scaleX(0.8533);">1</span>
<div style="left:1590px;top:603px;width:22px;height:14px;background:#f0f0f0;border-style:solid;border-width:1px;border-color:#fff #696969 #696969 #fff;box-shadow:inset -1px -1px 0 #a0a0a0;"></div>
<div style="left:1590px;top:618px;width:22px;height:14px;background:#f0f0f0;border-style:solid;border-width:1px;border-color:#fff #696969 #696969 #fff;box-shadow:inset -1px -1px 0 #a0a0a0;"></div>
<svg style="position:absolute;left:0;top:0;overflow:visible" width="1" height="1"><polygon points="1597.5,612.25 1604.5,612.25 1601.0,608.75" fill="#000"/></svg>
<svg style="position:absolute;left:0;top:0;overflow:visible" width="1" height="1"><polygon points="1597.5,622.75 1604.5,622.75 1601.0,626.25" fill="#000"/></svg>
<span class="t" style="left:1515px;top:643.19px;font-size:14.9px;line-height:14.9px;color:#000;transform:scaleX(0.9148);">Radius</span>
<div style="left:1560px;top:644px;width:28px;height:24px;background:#fff;border-style:solid;border-width:1px;border-color:#a0a0a0 #fff #fff #a0a0a0;box-shadow:inset 1px 1px 0 #696969;"></div>
<span class="t" style="left:1563px;top:647.19px;font-size:14.9px;line-height:14.9px;color:#000;transform:scaleX(0.8533);">3</span>
<div style="left:1590px;top:643px;width:22px;height:14px;background:#f0f0f0;border-style:solid;border-width:1px;border-color:#fff #696969 #696969 #fff;box-shadow:inset -1px -1px 0 #a0a0a0;"></div>
<div style="left:1590px;top:658px;width:22px;height:14px;background:#f0f0f0;border-style:solid;border-width:1px;border-color:#fff #696969 #696969 #fff;box-shadow:inset -1px -1px 0 #a0a0a0;"></div>
<svg style="position:absolute;left:0;top:0;overflow:visible" width="1" height="1"><polygon points="1597.5,652.25 1604.5,652.25 1601.0,648.75" fill="#000"/></svg>
<svg style="position:absolute;left:0;top:0;overflow:visible" width="1" height="1"><polygon points="1597.5,662.75 1604.5,662.75 1601.0,666.25" fill="#000"/></svg>
<div style="left:1155px;top:680px;width:15px;height:15px;background:#fff;border-style:solid;border-width:1px;border-color:#a0a0a0 #fff #fff #a0a0a0;box-shadow:inset 1px 1px 0 #696969;"></div>
<svg style="position:absolute;left:1155px;top:680px" width="15" height="15"><path d="M3.8 7.0 L6.5 10.5 L11.7 3.8" stroke="#000" stroke-width="2.2" fill="none"/></svg>
<span class="t" style="left:1177px;top:680.69px;font-size:14.9px;line-height:14.9px;color:#000;transform:scaleX(0.9736);">Show Image of Clicked point</span>
<div style="left:1155px;top:700px;width:15px;height:15px;background:#fff;border-style:solid;border-width:1px;border-color:#a0a0a0 #fff #fff #a0a0a0;box-shadow:inset 1px 1px 0 #696969;"></div>
<span class="t" style="left:1178px;top:700.69px;font-size:14.9px;line-height:14.9px;color:#000;transform:scaleX(0.9651);">Reproduce Aperture Position</span>
<div style="left:1373px;top:678px;width:91px;height:31px;background:#f0f0f0;border-style:solid;border-width:1px;border-color:#fff #696969 #696969 #fff;box-shadow:inset -1px -1px 0 #a0a0a0;"></div>
<span class="t" style="left:1381.5px;top:682.67px;font-size:16.1px;line-height:16.1px;color:#000;transform:scaleX(0.8667);">Save Image</span>
<div style="left:1470px;top:678px;width:148px;height:31px;background:#f0f0f0;border-style:solid;border-width:1px;border-color:#fff #696969 #696969 #fff;box-shadow:inset -1px -1px 0 #a0a0a0;"></div>
<span class="t" style="left:1485.0px;top:682.67px;font-size:16.1px;line-height:16.1px;color:#000;transform:scaleX(0.9088);">Copy to ClipBoard</span>
<div style="left:1619px;top:605px;width:61px;height:101px;border:1px solid #a0a0a0;box-shadow:1px 1px 0 #fff, inset 1px 1px 0 #fff;"></div>
<div style="left:1627px;top:599px;width:44px;height:12px;background:#f0f0f0;"></div>
<span class="t" style="left:1628px;top:599.69px;font-size:14.9px;line-height:14.9px;color:#000;transform:scaleX(1.0313);">Y Axis</span>
<span class="t" style="left:1626px;top:612.69px;font-size:14.9px;line-height:14.9px;color:#000;transform:scaleX(0.9678);">Min</span>
<span class="t" style="left:1651px;top:612.69px;font-size:14.9px;line-height:14.9px;color:#000;transform:scaleX(0.9331);">Max</span>
<div style="left:1625px;top:628px;width:21px;height:21px;background:#f0f0f0;border-style:solid;border-width:1px;border-color:#fff #696969 #696969 #fff;box-shadow:inset -1px -1px 0 #a0a0a0;"></div>
<svg style="position:absolute;left:0;top:0;overflow:visible" width="1" height="1"><polygon points="1631.0,640.75 1640.0,640.75 1635.5,636.25" fill="#000"/></svg>
<div style="left:1625px;top:652px;width:21px;height:21px;background:#f0f0f0;border-style:solid;border-width:1px;border-color:#fff #696969 #696969 #fff;box-shadow:inset -1px -1px 0 #a0a0a0;"></div>
<div style="left:1625px;top:678px;width:21px;height:22px;background:#f0f0f0;border-style:solid;border-width:1px;border-color:#fff #696969 #696969 #fff;box-shadow:inset -1px -1px 0 #a0a0a0;"></div>
<svg style="position:absolute;left:0;top:0;overflow:visible" width="1" height="1"><polygon points="1631.0,686.75 1640.0,686.75 1635.5,691.25" fill="#000"/></svg>
<div style="left:1652px;top:628px;width:21px;height:21px;background:#f0f0f0;border-style:solid;border-width:1px;border-color:#fff #696969 #696969 #fff;box-shadow:inset -1px -1px 0 #a0a0a0;"></div>
<svg style="position:absolute;left:0;top:0;overflow:visible" width="1" height="1"><polygon points="1658.0,640.75 1667.0,640.75 1662.5,636.25" fill="#000"/></svg>
<div style="left:1652px;top:652px;width:21px;height:21px;background:#f0f0f0;border-style:solid;border-width:1px;border-color:#fff #696969 #696969 #fff;box-shadow:inset -1px -1px 0 #a0a0a0;"></div>
<div style="left:1652px;top:678px;width:21px;height:22px;background:#f0f0f0;border-style:solid;border-width:1px;border-color:#fff #696969 #696969 #fff;box-shadow:inset -1px -1px 0 #a0a0a0;"></div>
<svg style="position:absolute;left:0;top:0;overflow:visible" width="1" height="1"><polygon points="1658.0,686.75 1667.0,686.75 1662.5,691.25" fill="#000"/></svg>
<div style="left:1684px;top:605px;width:75px;height:67px;border:1px solid #a0a0a0;box-shadow:1px 1px 0 #fff, inset 1px 1px 0 #fff;"></div>
<div style="left:1692px;top:599px;width:27px;height:12px;background:#f0f0f0;"></div>
<span class="t" style="left:1693px;top:599.69px;font-size:14.9px;line-height:14.9px;color:#000;transform:scaleX(0.8965);">Line</span>
<div style="left:1694px;top:617px;width:13px;height:13px;background:#fff;border-style:solid;border-width:1px;border-color:#a0a0a0 #fff #fff #a0a0a0;box-shadow:inset 1px 1px 0 #696969;"></div>
<svg style="position:absolute;left:1694px;top:617px" width="13" height="13"><path d="M3.2 6.1 L5.6 9.1 L10.1 3.2" stroke="#000" stroke-width="2.2" fill="none"/></svg>
<span class="t" style="left:1716px;top:615.19px;font-size:14.9px;line-height:14.9px;color:#000;transform:scaleX(0.9689);">Axis</span>
<div style="left:1694px;top:634px;width:13px;height:13px;background:#fff;border-style:solid;border-width:1px;border-color:#a0a0a0 #fff #fff #a0a0a0;box-shadow:inset 1px 1px 0 #696969;"></div>
<svg style="position:absolute;left:1694px;top:634px" width="13" height="13"><path d="M3.2 6.1 L5.6 9.1 L10.1 3.2" stroke="#000" stroke-width="2.2" fill="none"/></svg>
<span class="t" style="left:1716px;top:633.49px;font-size:14.9px;line-height:14.9px;color:#000;transform:scaleX(0.9308);">Data</span>
<div style="left:1693px;top:649px;width:58px;height:18px;background:#f0f0f0;border-style:solid;border-width:1px;border-color:#fff #696969 #696969 #fff;box-shadow:inset -1px -1px 0 #a0a0a0;"></div>
<span class="t" style="left:1702.0px;top:649.69px;font-size:14.9px;line-height:14.9px;color:#000;transform:scaleX(0.9759);">Hilight</span>
<div style="left:1763px;top:605px;width:70px;height:67px;border:1px solid #a0a0a0;box-shadow:1px 1px 0 #fff, inset 1px 1px 0 #fff;"></div>
<div style="left:1772px;top:599px;width:37px;height:12px;background:#f0f0f0;"></div>
<span class="t" style="left:1773px;top:599.69px;font-size:14.9px;line-height:14.9px;color:#000;transform:scaleX(0.9283);">Width</span>
<svg style="position:absolute;left:1774px;top:621px" width="13" height="13"><circle cx="6.5" cy="6.5" r="5.5" fill="#fff" stroke="#fff"/><path d="M 2.3 10.7 A 5.0 5.0 0 0 1 10.7 2.3" stroke="#8a8a8a" stroke-width="1.5" fill="none"/><circle cx="6.5" cy="6.5" r="2.2" fill="#a0a0a0"/></svg>
<span class="t" style="left:1796px;top:620.69px;font-size:14.9px;line-height:14.9px;color:#a0a0a0;transform:scaleX(0.8503);">Part</span>
<svg style="position:absolute;left:1774px;top:647px" width="13" height="13"><circle cx="6.5" cy="6.5" r="5.5" fill="#fff" stroke="#fff"/><path d="M 2.3 10.7 A 5.0 5.0 0 0 1 10.7 2.3" stroke="#8a8a8a" stroke-width="1.5" fill="none"/></svg>
<span class="t" style="left:1796px;top:646.69px;font-size:14.9px;line-height:14.9px;color:#a0a0a0;transform:scaleX(0.8824);">Entire</span>
<div style="left:1841px;top:602px;width:59px;height:23px;background:#f0f0f0;border-style:solid;border-width:1px;border-color:#fff #696969 #696969 #fff;box-shadow:inset -1px -1px 0 #a0a0a0;"></div>
<span class="t" style="left:1848px;top:603.67px;font-size:16.1px;line-height:16.1px;color:#000;transform:scaleX(0.8770);">Correct</span>
<div style="left:1841px;top:628px;width:59px;height:22px;background:#f0f0f0;border-style:solid;border-width:1px;border-color:#fff #696969 #696969 #fff;box-shadow:inset -1px -1px 0 #a0a0a0;"></div>
<span class="t" style="left:1854px;top:629.67px;font-size:16.1px;line-height:16.1px;color:#000;transform:scaleX(0.9045);">Noise</span>
<div style="left:1839px;top:654px;width:13px;height:13px;background:#fff;border-style:solid;border-width:1px;border-color:#a0a0a0 #fff #fff #a0a0a0;box-shadow:inset 1px 1px 0 #696969;"></div>
<svg style="position:absolute;left:1839px;top:654px" width="13" height="13"><path d="M3.2 6.1 L5.6 9.1 L10.1 3.2" stroke="#000" stroke-width="2.2" fill="none"/></svg>
<span class="t" style="left:1861px;top:653.19px;font-size:14.9px;line-height:14.9px;color:#000;transform:scaleX(0.9570);">Inform</span>
<div style="left:1683px;top:678px;width:81px;height:34px;background:#f0f0f0;border-style:solid;border-width:1px;border-color:#fff #696969 #696969 #fff;box-shadow:inset -1px -1px 0 #a0a0a0;"></div>
<span class="t" style="left:1689.5px;top:683.67px;font-size:16.1px;line-height:16.1px;color:#000;transform:scaleX(0.8689);">[3D] Image</span>
<div style="left:1445px;top:718px;width:152px;height:34px;background:#f0f0f0;border-style:solid;border-width:1px;border-color:#fff #696969 #696969 #fff;box-shadow:inset -1px -1px 0 #a0a0a0;"></div>
<span class="t" style="left:1455.5px;top:726.30px;font-size:15.0px;line-height:15.0px;color:#101030;font-weight:bold;transform:scaleX(0.9412);">Lunar Identification</span>
<div style="left:1608px;top:718px;width:212px;height:34px;background:#f0f0f0;border-style:solid;border-width:1px;border-color:#fff #696969 #696969 #fff;box-shadow:inset -1px -1px 0 #a0a0a0;"></div>
<span class="t" style="left:1631.5px;top:726.46px;font-size:16px;line-height:16px;color:#000;font-weight:bold;transform:scaleX(1.1025);">Diffraction Analysis</span>
<div style="left:1825px;top:718px;width:75px;height:34px;background:#f0f0f0;border-style:solid;border-width:1px;border-color:#fff #696969 #696969 #fff;box-shadow:inset -1px -1px 0 #a0a0a0;"></div>
<span class="t" style="left:1841px;top:726.46px;font-size:16px;line-height:16px;color:#000;font-weight:bold;transform:scaleX(1.0710);">Make R</span>
<div style="left:1145px;top:760px;width:750px;height:2px;background:#fff;border-top:1px solid #a0a0a0;"></div>
<div style="left:1155px;top:794px;width:745px;height:112px;border:1px solid #a0a0a0;box-shadow:1px 1px 0 #fff, inset 1px 1px 0 #fff;"></div>
<div style="left:1163px;top:788px;width:84px;height:12px;background:#f0f0f0;"></div>
<span class="t" style="left:1164px;top:788.19px;font-size:14.9px;line-height:14.9px;color:#000;transform:scaleX(1.0211);">S/N vs Error</span>
<span class="t" style="left:1166px;top:811.30px;font-size:15px;line-height:15px;color:#000;font-weight:bold;transform:scaleX(1.1904);">S/N (Full drop)</span>
<div style="left:1295px;top:805px;width:70px;height:33px;background:#fff;border-style:solid;border-width:1px;border-color:#a0a0a0 #fff #fff #a0a0a0;box-shadow:inset 1px 1px 0 #696969;"></div>
<span class="t" style="left:1305px;top:811.92px;font-size:19px;line-height:19px;color:#0000ff;font-weight:bold;transform:scaleX(0.9087);">4.1</span>
<span class="t" style="left:1396px;top:811.30px;font-size:15px;line-height:15px;color:#000;font-weight:bold;transform:scaleX(1.2398);">S/N</span>
<div style="left:1435px;top:804px;width:60px;height:34px;background:#fff;border-style:solid;border-width:1px;border-color:#a0a0a0 #fff #fff #a0a0a0;box-shadow:inset 1px 1px 0 #696969;"></div>
<span class="t" style="left:1439px;top:811.92px;font-size:19px;line-height:19px;color:#ff0000;font-weight:bold;transform:scaleX(1.0602);">3.9</span>
<span class="t" style="left:1506px;top:811.30px;font-size:15px;line-height:15px;color:#000;font-weight:bold;transform:scaleX(1.1652);">expected on</span>
<div style="left:1616px;top:804px;width:60px;height:34px;background:#fff;border-style:solid;border-width:1px;border-color:#a0a0a0 #fff #fff #a0a0a0;box-shadow:inset 1px 1px 0 #696969;"></div>
<span class="t" style="left:1620px;top:811.72px;font-size:19px;line-height:19px;color:#000;transform:scaleX(1.0602);">3.3</span>
<span class="t" style="left:1686px;top:811.30px;font-size:15px;line-height:15px;color:#000;font-weight:bold;transform:scaleX(1.1407);">Mag drop</span>
<span class="t" style="left:1806px;top:811.30px;font-size:15px;line-height:15px;color:#000;font-weight:bold;transform:scaleX(1.1649);">Frame exposure</span>
<span class="t" style="left:1166px;top:850.30px;font-size:15px;line-height:15px;color:#000;font-weight:bold;transform:scaleX(1.1618);">Fresnel</span>
<span class="t" style="left:1166px;top:870.30px;font-size:15px;line-height:15px;color:#000;font-weight:bold;transform:scaleX(1.0939);">Number</span>
<div style="left:1236px;top:854px;width:60px;height:34px;background:#fff;border-style:solid;border-width:1px;border-color:#a0a0a0 #fff #fff #a0a0a0;box-shadow:inset 1px 1px 0 #696969;"></div>
<span class="t" style="left:1241px;top:861.42px;font-size:19px;line-height:19px;color:#000;font-weight:bold;transform:scaleX(1.0410);">1017</span>
<span class="t" style="left:1316px;top:850.30px;font-size:15px;line-height:15px;color:#000;font-weight:bold;transform:scaleX(1.1286);">Lower Limit</span>
<span class="t" style="left:1326px;top:870.30px;font-size:15px;line-height:15px;color:#000;font-weight:bold;transform:scaleX(1.1704);">for detect</span>
<div style="left:1415px;top:854px;width:71px;height:34px;background:#fff;border-style:solid;border-width:1px;border-color:#a0a0a0 #fff #fff #a0a0a0;box-shadow:inset 1px 1px 0 #696969;"></div>
<span class="t" style="left:1419px;top:861.42px;font-size:19px;line-height:19px;color:#0000ff;font-weight:bold;transform:scaleX(1.0410);">1310</span>
<span class="t" style="left:1486px;top:859.30px;font-size:15px;line-height:15px;color:#000;font-weight:bold;transform:scaleX(1.1468);">msec</span>
<span class="t" style="left:1546px;top:851.30px;font-size:15px;line-height:15px;color:#000;font-weight:bold;transform:scaleX(1.1556);">Predicted</span>
<span class="t" style="left:1546px;top:870.30px;font-size:15px;line-height:15px;color:#000;font-weight:bold;transform:scaleX(1.0981);">Time Error</span>
<div style="left:1636px;top:854px;width:80px;height:34px;background:#fff;border-style:solid;border-width:1px;border-color:#a0a0a0 #fff #fff #a0a0a0;box-shadow:inset 1px 1px 0 #696969;"></div>
<span class="t" style="left:1640px;top:861.42px;font-size:19px;line-height:19px;color:#ff0000;font-weight:bold;transform:scaleX(1.0410);">299</span>
<span class="t" style="left:1716px;top:870.30px;font-size:15px;line-height:15px;color:#000;font-weight:bold;transform:scaleX(1.1468);">msec</span>
<span class="t" style="left:1776px;top:850.30px;font-size:15px;line-height:15px;color:#000;font-weight:bold;transform:scaleX(1.1902);">Expected Error</span>
<span class="t" style="left:1776px;top:870.30px;font-size:15px;line-height:15px;color:#000;font-weight:bold;transform:scaleX(1.1996);">Analyzing event</span>
</body></html>
